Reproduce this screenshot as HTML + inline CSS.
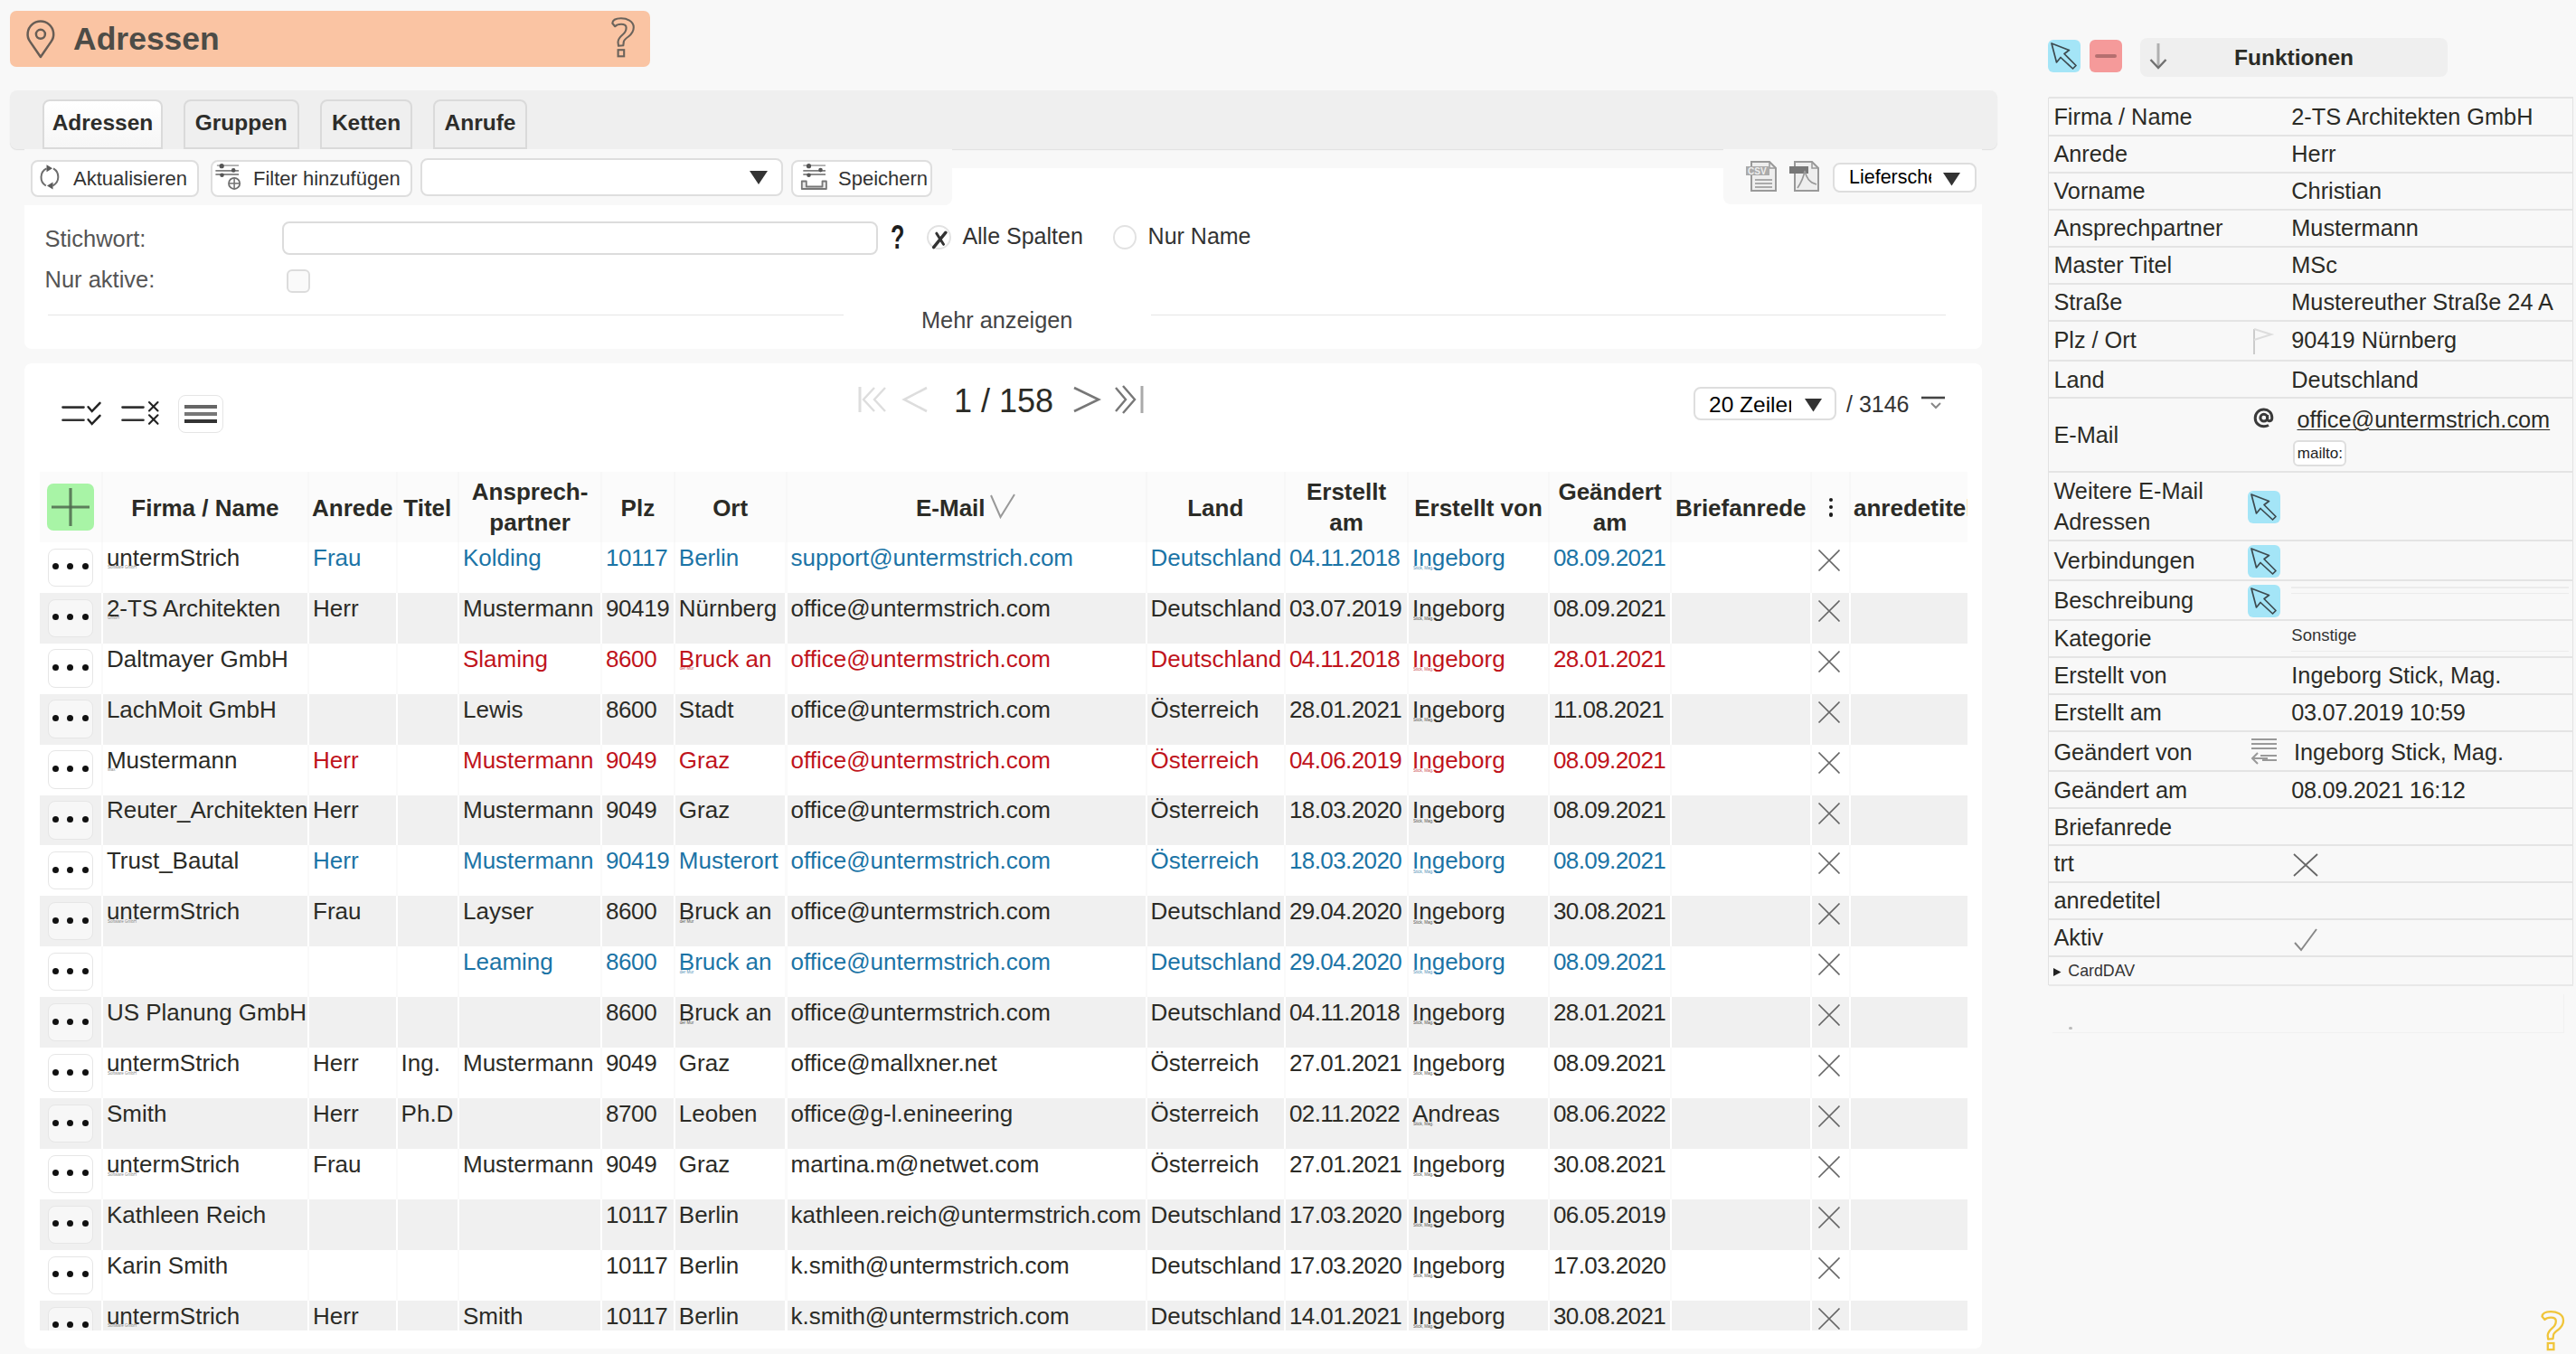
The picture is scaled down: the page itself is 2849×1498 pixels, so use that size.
<!DOCTYPE html>
<html><head><meta charset="utf-8"><title>Adressen</title>
<style>
html,body{margin:0;padding:0;}
body{width:2849px;height:1498px;position:relative;overflow:hidden;background:#f8f8f8;font-family:"Liberation Sans",sans-serif;}
.t{position:absolute;white-space:nowrap;}
.r{position:absolute;}
</style></head><body>
<div class="r" style="left:11.00px;top:12.00px;width:708.00px;height:62.00px;background:#fac4a3;border-radius:7px;"></div>
<svg class="r" style="left:27.00px;top:20.00px;" width="36" height="46" viewBox="0 0 36 46"><path d="M17.9 43 L6.13 25.9 A14.3 14.3 0 1 1 29.67 25.9 Z" fill="none" stroke="#675d55" stroke-width="2.5" stroke-linejoin="round"/><circle cx="17.9" cy="17.8" r="5" fill="none" stroke="#675d55" stroke-width="2.5"/></svg>
<div class="t " style="left:81.00px;top:25.75px;font-size:35.5px;line-height:35.5px;color:#4d4c47;font-weight:bold;">Adressen</div>
<svg class="r" style="left:660.00px;top:10.00px;" width="60" height="65" viewBox="0 0 60 65"><path d="M17.3 15.8 C17.5 13 20 10.3 26.9 10.3 C33 10.3 40.8 13 40.8 20.2 C40.8 24 39.4 27 35 30.5 C31.5 33 29.8 34.5 29.8 36.5 L29.3 40.3 L24 40.8 L23.5 36.5 C23.5 33 25.9 30.7 29 28 C31.5 26 32.6 23.5 32.6 20.6 C32.6 18 30.5 16.8 27 16.8 C23 16.8 21.5 17.8 20.2 19.2 Z" fill="none" stroke="#6b635b" stroke-width="2.1" stroke-linejoin="round"/><rect x="23.6" y="45.2" width="6.6" height="7.1" fill="none" stroke="#6b635b" stroke-width="2.1"/></svg>
<div class="r" style="left:11.00px;top:99.50px;width:2198.00px;height:65.50px;background:#efefef;border-radius:8px;box-shadow:0 1.5px 1px -0.5px #e0e0e0;"></div>
<div class="r" style="left:47.00px;top:109.50px;width:133.00px;height:55.00px;background:linear-gradient(#ffffff,#f6f6f6);border:2px solid #dadada;border-radius:8px 8px 0 0;box-sizing:border-box;"></div>
<div class="t " style="left:47.00px;top:124.26px;font-size:24.5px;line-height:24.5px;color:#2d2d2a;font-weight:bold;width:133.00px;text-align:center;">Adressen</div>
<div class="r" style="left:203.00px;top:109.50px;width:127.50px;height:55.00px;background:#efefef;border:2px solid #dadada;border-radius:8px 8px 0 0;box-sizing:border-box;"></div>
<div class="t " style="left:203.00px;top:124.26px;font-size:24.5px;line-height:24.5px;color:#2d2d2a;font-weight:bold;width:127.50px;text-align:center;">Gruppen</div>
<div class="r" style="left:354.00px;top:109.50px;width:102.00px;height:55.00px;background:#efefef;border:2px solid #dadada;border-radius:8px 8px 0 0;box-sizing:border-box;"></div>
<div class="t " style="left:354.00px;top:124.26px;font-size:24.5px;line-height:24.5px;color:#2d2d2a;font-weight:bold;width:102.00px;text-align:center;">Ketten</div>
<div class="r" style="left:479.00px;top:109.50px;width:104.00px;height:55.00px;background:#efefef;border:2px solid #dadada;border-radius:8px 8px 0 0;box-sizing:border-box;"></div>
<div class="t " style="left:479.00px;top:124.26px;font-size:24.5px;line-height:24.5px;color:#2d2d2a;font-weight:bold;width:104.00px;text-align:center;">Anrufe</div>
<div class="r" style="left:27.00px;top:186.00px;width:2165.00px;height:199.50px;background:#fff;border-radius:8px;"></div>
<div class="r" style="left:27.00px;top:165.00px;width:1026.00px;height:62.00px;background:#f8f8f8;border-radius:0 0 8px 0;"></div>
<div class="r" style="left:34.00px;top:176.50px;width:185.50px;height:41.00px;background:#fff;border:2px solid #dedede;border-radius:8px;box-sizing:border-box;"></div>
<svg class="r" style="left:36.00px;top:176.00px;" width="40" height="40" viewBox="0 0 40 40"><g fill="none" stroke="#6e6e6e" stroke-width="2"><path d="M23 10.3 A11 11 0 0 1 22.4 29.5"/><path d="M14.8 29.5 A11 11 0 0 1 15.5 10.3"/></g><path d="M15.5 6.2 L22 10.3 L15.5 14.3 Z" fill="#5a5a5a"/><path d="M22.5 25.5 L16 29.5 L22.5 33.5 Z" fill="#5a5a5a"/></svg>
<div class="t " style="left:81.00px;top:186.68px;font-size:22px;line-height:22px;color:#333;">Aktualisieren</div>
<div class="r" style="left:232.50px;top:176.50px;width:223.00px;height:41.00px;background:#fff;border:2px solid #dedede;border-radius:8px;box-sizing:border-box;"></div>
<svg class="r" style="left:234.00px;top:176.00px;" width="40" height="40" viewBox="0 0 40 40"><g stroke="#7a7a7a" stroke-width="1.7"><line x1="5.9" y1="7.1" x2="30.1" y2="7.1" stroke="#aaa"/><line x1="4.4" y1="12.9" x2="30.1" y2="12.9"/><line x1="4.4" y1="17" x2="30.1" y2="17"/></g><g fill="#555"><circle cx="11.2" cy="7.7" r="2.6"/><circle cx="24.2" cy="12.4" r="2.3"/><circle cx="11.5" cy="17.7" r="2.3"/></g><circle cx="25.1" cy="26.9" r="6.1" fill="#fff" stroke="#6e6e6e" stroke-width="1.8"/><line x1="25.1" y1="20.8" x2="25.1" y2="33" stroke="#777" stroke-width="1.6"/><line x1="19" y1="26.9" x2="31.2" y2="26.9" stroke="#777" stroke-width="1.6"/></svg>
<div class="t " style="left:280.00px;top:186.68px;font-size:22px;line-height:22px;color:#333;">Filter hinzufügen</div>
<div class="r" style="left:464.50px;top:175.00px;width:401.00px;height:41.50px;background:#fff;border:2px solid #dedede;border-radius:8px;box-sizing:border-box;"></div>
<svg class="r" style="left:828.00px;top:188.00px;" width="22" height="17" viewBox="0 0 22 17"><path d="M1 1 L21 1 L11 16 Z" fill="#333"/></svg>
<div class="r" style="left:875.00px;top:176.50px;width:155.50px;height:41.00px;background:#fff;border:2px solid #dedede;border-radius:8px;box-sizing:border-box;"></div>
<svg class="r" style="left:880.00px;top:176.00px;" width="40" height="40" viewBox="0 0 40 40"><g stroke="#7a7a7a" stroke-width="1.7"><line x1="8.3" y1="7.1" x2="33" y2="7.1" stroke="#aaa"/><line x1="8.3" y1="12.9" x2="33" y2="12.9"/><line x1="8.3" y1="17" x2="33" y2="17"/></g><g fill="#555"><circle cx="14.5" cy="7.7" r="2.6"/><circle cx="27.5" cy="12.1" r="2.3"/><circle cx="14.5" cy="17.7" r="2.3"/></g><path d="M6.8 24.5 L6.8 33 L33.9 33 L33.9 24.5 L29.5 24.5 L29.5 30.5 L11.8 30.5 L11.8 24.5 Z" fill="#e8e8e8" stroke="#777" stroke-width="1.8" stroke-linejoin="round"/></svg>
<div class="t " style="left:927.00px;top:186.68px;font-size:22px;line-height:22px;color:#333;">Speichern</div>
<div class="r" style="left:1906.00px;top:165.00px;width:286.00px;height:61.00px;background:#f8f8f8;border-radius:0 0 0 8px;"></div>
<svg class="r" style="left:1929.00px;top:177.00px;" width="38" height="36" viewBox="0 0 38 36"><path d="M8 2 L28 2 L35 9 L35 34 L8 34 Z" fill="#eee" stroke="#999" stroke-width="2"/><path d="M28 2 L28 9 L35 9" fill="none" stroke="#999" stroke-width="1.5"/><rect x="2" y="7" width="26" height="10" fill="#aaa"/><text x="4" y="16" font-family="Liberation Sans" font-size="10" font-weight="bold" fill="#eee">CSV</text><g stroke="#aaa" stroke-width="2"><line x1="12" y1="22" x2="31" y2="22"/><line x1="12" y1="26" x2="31" y2="26"/><line x1="12" y1="30" x2="31" y2="30"/></g></svg>
<svg class="r" style="left:1977.00px;top:177.00px;" width="38" height="36" viewBox="0 0 38 36"><path d="M8 2 L27 2 L34 9 L34 34 L8 34 Z" fill="#eee" stroke="#999" stroke-width="2"/><path d="M27 2 L27 9 L34 9" fill="none" stroke="#999" stroke-width="1.5"/><rect x="2" y="7" width="21" height="8" fill="#777"/><path d="M11 31 C15 25 18 18 19 12 C21 20 24 25 32 27" fill="none" stroke="#999" stroke-width="1.6"/></svg>
<div class="r" style="left:2026.50px;top:180.30px;width:159.00px;height:33.20px;background:#fff;border:2px solid #dedede;border-radius:8px;box-sizing:border-box;"></div>
<div class="t" style="left:2045px;top:183px;width:91px;overflow:hidden;font-size:21.5px;line-height:26px;color:#000;">Lieferschein</div>
<svg class="r" style="left:2148.00px;top:190.00px;" width="22" height="17" viewBox="0 0 22 17"><path d="M1 1 L20 1 L10.5 15.5 Z" fill="#333"/></svg>
<div class="t " style="left:49.50px;top:251.61px;font-size:25.5px;line-height:25.5px;color:#555;">Stichwort:</div>
<div class="t " style="left:49.50px;top:296.61px;font-size:25.5px;line-height:25.5px;color:#555;">Nur aktive:</div>
<div class="r" style="left:311.50px;top:244.80px;width:659.20px;height:37.40px;border:2px solid #dcdcdc;border-radius:8px;box-sizing:border-box;background:#fff;"></div>
<div class="t " style="left:985.00px;top:245.03px;font-size:36px;line-height:36px;color:#1e1e1e;font-weight:bold;transform:scaleX(0.7);transform-origin:0 0;">?</div>
<div class="r" style="left:1025.00px;top:249.00px;width:27.00px;height:27.00px;border:2px solid #e2e2e2;border-radius:50%;box-sizing:border-box;"></div>
<svg class="r" style="left:1025.00px;top:249.00px;" width="30" height="30" viewBox="0 0 30 30"><path d="M7.6 24.6 L21 8.2" stroke="#333" stroke-width="3.4" stroke-linecap="round" fill="none"/><path d="M10.8 9.2 L18.5 21.3" stroke="#333" stroke-width="3" stroke-linecap="round" fill="none"/></svg>
<div class="t " style="left:1064.40px;top:248.64px;font-size:25px;line-height:25px;color:#333;">Alle Spalten</div>
<div class="r" style="left:1230.50px;top:249.00px;width:26.50px;height:27.00px;border:2px solid #e2e2e2;border-radius:50%;box-sizing:border-box;"></div>
<div class="t " style="left:1269.60px;top:248.64px;font-size:25px;line-height:25px;color:#333;">Nur Name</div>
<div class="r" style="left:317.40px;top:298.30px;width:25.90px;height:26.10px;border:2px solid #dcdcdc;border-radius:6px;box-sizing:border-box;background:#fafafa;"></div>
<div class="r" style="left:53.00px;top:347.50px;width:880.00px;height:1.50px;background:#e6e6e6;"></div>
<div class="r" style="left:1273.00px;top:347.50px;width:879.00px;height:1.50px;background:#e6e6e6;"></div>
<div class="t " style="left:1019.00px;top:341.58px;font-size:25.3px;line-height:25.3px;color:#444;">Mehr anzeigen</div>
<div class="r" style="left:27.00px;top:402.00px;width:2165.00px;height:1089.50px;background:#fff;border-radius:8px;"></div>
<svg class="r" style="left:66.00px;top:442.00px;" width="48" height="30" viewBox="0 0 48 30"><g stroke="#333" stroke-width="2.6" stroke-linecap="round"><line x1="3.5" y1="8.6" x2="26.5" y2="8.6"/><line x1="3.5" y1="22.7" x2="26.5" y2="22.7"/></g><path d="M31.6 8.3 L35.7 13 L44.5 3.9" fill="none" stroke="#222" stroke-width="2.5" stroke-linecap="round"/><path d="M31.6 22.3 L35.7 27 L44.5 17.9" fill="none" stroke="#222" stroke-width="2.5" stroke-linecap="round"/></svg>
<svg class="r" style="left:132.00px;top:442.00px;" width="48" height="30" viewBox="0 0 48 30"><g stroke="#333" stroke-width="2.6" stroke-linecap="round"><line x1="3.5" y1="8.6" x2="26.5" y2="8.6"/><line x1="3.5" y1="22.7" x2="26.5" y2="22.7"/></g><g stroke="#222" stroke-width="2.1" stroke-linecap="round"><line x1="33" y1="3" x2="42.5" y2="12.5"/><line x1="42.5" y1="3" x2="33" y2="12.5"/><line x1="33" y1="17.3" x2="42.5" y2="26.8"/><line x1="42.5" y1="17.3" x2="33" y2="26.8"/></g></svg>
<div class="r" style="left:197.00px;top:436.80px;width:49.80px;height:42.20px;border:1.5px solid #e5e5e5;border-radius:8px;box-sizing:border-box;background:#fff;"></div>
<div class="r" style="left:203.80px;top:447.70px;width:36.20px;height:4.00px;background:#666;"></div>
<div class="r" style="left:203.80px;top:455.80px;width:36.20px;height:4.00px;background:#777;"></div>
<div class="r" style="left:203.80px;top:464.00px;width:36.20px;height:4.00px;background:#333;"></div>
<svg class="r" style="left:948.00px;top:426.00px;" width="36" height="32" viewBox="0 0 36 32"><line x1="3" y1="2" x2="3" y2="30" stroke="#ddd" stroke-width="3"/><path d="M19 3 L7 16 L19 29" fill="none" stroke="#ddd" stroke-width="2.4"/><path d="M31 3 L19 16 L31 29" fill="none" stroke="#ddd" stroke-width="2.4"/></svg>
<svg class="r" style="left:996.00px;top:426.00px;" width="32" height="32" viewBox="0 0 32 32"><path d="M29 3 L4 16 L29 29" fill="none" stroke="#ddd" stroke-width="2.6"/></svg>
<div class="t " style="left:1055.00px;top:425.83px;font-size:36px;line-height:36px;color:#2b2b26;letter-spacing:0px;">1 / 158</div>
<svg class="r" style="left:1185.00px;top:426.00px;" width="34" height="32" viewBox="0 0 34 32"><path d="M3 3 L30 16 L3 29" fill="none" stroke="#777" stroke-width="2.6"/></svg>
<svg class="r" style="left:1232.00px;top:425.00px;" width="36" height="34" viewBox="0 0 36 34"><path d="M2 4 L13 17 L2 30" fill="none" stroke="#777" stroke-width="2.4"/><path d="M10 2 L23 17 L10 32" fill="none" stroke="#777" stroke-width="2.4"/><line x1="31" y1="2" x2="31" y2="32" stroke="#aaa" stroke-width="3"/></svg>
<div class="r" style="left:1872.90px;top:427.70px;width:158.30px;height:37.50px;background:#fff;border:2px solid #dedede;border-radius:8px;box-sizing:border-box;"></div>
<div class="t" style="left:1890px;top:434px;width:91px;overflow:hidden;font-size:24.5px;line-height:28px;color:#000;">20 Zeilen</div>
<svg class="r" style="left:1995.00px;top:440.00px;" width="21" height="17" viewBox="0 0 21 17"><path d="M1 1 L20 1 L10.5 15.5 Z" fill="#333"/></svg>
<div class="t " style="left:2042.00px;top:434.74px;font-size:25px;line-height:25px;color:#333;">/ 3146</div>
<svg class="r" style="left:2124.00px;top:437.00px;" width="28" height="18" viewBox="0 0 28 18"><line x1="1" y1="3" x2="27" y2="3" stroke="#444" stroke-width="2.6"/><path d="M12 9 L17 14 L22 9" fill="none" stroke="#888" stroke-width="2"/></svg>
<div class="r" style="left:0;top:0;width:2176px;height:1472px;overflow:hidden;">
<div class="r" style="left:44.00px;top:522.00px;width:2132.00px;height:78.50px;background:#fbfbfb;"></div>
<div class="t " style="left:113.90px;top:549.39px;font-size:26px;line-height:26px;color:#2b2b26;font-weight:bold;width:226.10px;text-align:center;">Firma / Name</div>
<div class="t " style="left:342.00px;top:549.39px;font-size:26px;line-height:26px;color:#2b2b26;font-weight:bold;width:95.60px;text-align:center;">Anrede</div>
<div class="t " style="left:439.60px;top:549.39px;font-size:26px;line-height:26px;color:#2b2b26;font-weight:bold;width:66.40px;text-align:center;">Titel</div>
<div class="t " style="left:508.00px;top:530.99px;font-size:26px;line-height:26px;color:#2b2b26;font-weight:bold;width:156.20px;text-align:center;">Ansprech-</div>
<div class="t " style="left:508.00px;top:564.99px;font-size:26px;line-height:26px;color:#2b2b26;font-weight:bold;width:156.20px;text-align:center;">partner</div>
<div class="t " style="left:666.00px;top:549.39px;font-size:26px;line-height:26px;color:#2b2b26;font-weight:bold;width:78.80px;text-align:center;">Plz</div>
<div class="t " style="left:746.80px;top:549.39px;font-size:26px;line-height:26px;color:#2b2b26;font-weight:bold;width:121.70px;text-align:center;">Ort</div>
<div class="t " style="left:1013.00px;top:549.39px;font-size:26px;line-height:26px;color:#2b2b26;font-weight:bold;">E-Mail</div>
<div class="t " style="left:1268.60px;top:549.39px;font-size:26px;line-height:26px;color:#2b2b26;font-weight:bold;width:151.40px;text-align:center;">Land</div>
<div class="t " style="left:1422.00px;top:530.99px;font-size:26px;line-height:26px;color:#2b2b26;font-weight:bold;width:134.00px;text-align:center;">Erstellt</div>
<div class="t " style="left:1422.00px;top:564.99px;font-size:26px;line-height:26px;color:#2b2b26;font-weight:bold;width:134.00px;text-align:center;">am</div>
<div class="t " style="left:1558.00px;top:549.39px;font-size:26px;line-height:26px;color:#2b2b26;font-weight:bold;width:154.00px;text-align:center;">Erstellt von</div>
<div class="t " style="left:1714.00px;top:530.99px;font-size:26px;line-height:26px;color:#2b2b26;font-weight:bold;width:133.00px;text-align:center;">Geändert</div>
<div class="t " style="left:1714.00px;top:564.99px;font-size:26px;line-height:26px;color:#2b2b26;font-weight:bold;width:133.00px;text-align:center;">am</div>
<div class="t " style="left:1849.00px;top:549.39px;font-size:26px;line-height:26px;color:#2b2b26;font-weight:bold;width:152.50px;text-align:center;">Briefanrede</div>
<div class="t " style="left:2050.00px;top:549.39px;font-size:26px;line-height:26px;color:#2b2b26;font-weight:bold;">anredetitel</div>
<svg class="r" style="left:1093.00px;top:545.00px;" width="32" height="30" viewBox="0 0 32 30"><path d="M3 3 L13.5 27 L29 2" fill="none" stroke="#999" stroke-width="2"/></svg>
<div class="r" style="left:111.90px;top:522.00px;width:2.00px;height:78.50px;background:#f7f7f7;"></div>
<div class="r" style="left:340.00px;top:522.00px;width:2.00px;height:78.50px;background:#f7f7f7;"></div>
<div class="r" style="left:437.60px;top:522.00px;width:2.00px;height:78.50px;background:#f7f7f7;"></div>
<div class="r" style="left:506.00px;top:522.00px;width:2.00px;height:78.50px;background:#f7f7f7;"></div>
<div class="r" style="left:664.00px;top:522.00px;width:2.00px;height:78.50px;background:#f7f7f7;"></div>
<div class="r" style="left:744.80px;top:522.00px;width:2.00px;height:78.50px;background:#f7f7f7;"></div>
<div class="r" style="left:868.50px;top:522.00px;width:2.00px;height:78.50px;background:#f7f7f7;"></div>
<div class="r" style="left:1266.60px;top:522.00px;width:2.00px;height:78.50px;background:#f7f7f7;"></div>
<div class="r" style="left:1420.00px;top:522.00px;width:2.00px;height:78.50px;background:#f7f7f7;"></div>
<div class="r" style="left:1556.00px;top:522.00px;width:2.00px;height:78.50px;background:#f7f7f7;"></div>
<div class="r" style="left:1712.00px;top:522.00px;width:2.00px;height:78.50px;background:#f7f7f7;"></div>
<div class="r" style="left:1847.00px;top:522.00px;width:2.00px;height:78.50px;background:#f7f7f7;"></div>
<div class="r" style="left:2001.50px;top:522.00px;width:2.00px;height:78.50px;background:#f7f7f7;"></div>
<div class="r" style="left:2045.00px;top:522.00px;width:2.00px;height:78.50px;background:#f7f7f7;"></div>
<div class="r" style="left:52.00px;top:535.00px;width:52.00px;height:52.00px;background:#a8f4a6;border-radius:7px;"></div>
<svg class="r" style="left:52.00px;top:535.00px;" width="52" height="52" viewBox="0 0 52 52"><line x1="26" y1="5" x2="26" y2="47" stroke="#4f6b4f" stroke-width="3.2" opacity="0.85"/><line x1="5" y1="26" x2="47" y2="26" stroke="#4f6b4f" stroke-width="3.2" opacity="0.85"/></svg>
<div class="r" style="left:2022.50px;top:551.00px;width:4.20px;height:4.20px;background:#1a1a1a;border-radius:50%;"></div>
<div class="r" style="left:2022.50px;top:559.00px;width:4.20px;height:4.20px;background:#1a1a1a;border-radius:50%;"></div>
<div class="r" style="left:2022.50px;top:567.40px;width:4.20px;height:4.20px;background:#1a1a1a;border-radius:50%;"></div>
<div class="r" style="left:44.00px;top:599.90px;width:2132.00px;height:55.93px;background:#fafafa;"></div>
<div class="r" style="left:44.00px;top:599.90px;width:67.70px;height:55.93px;background:#ffffff;"></div>
<div class="r" style="left:113.90px;top:599.90px;width:226.10px;height:55.93px;background:#ffffff;"></div>
<div class="r" style="left:342.00px;top:599.90px;width:95.60px;height:55.93px;background:#ffffff;"></div>
<div class="r" style="left:439.60px;top:599.90px;width:66.40px;height:55.93px;background:#ffffff;"></div>
<div class="r" style="left:508.00px;top:599.90px;width:156.20px;height:55.93px;background:#ffffff;"></div>
<div class="r" style="left:666.00px;top:599.90px;width:78.80px;height:55.93px;background:#ffffff;"></div>
<div class="r" style="left:746.80px;top:599.90px;width:121.70px;height:55.93px;background:#ffffff;"></div>
<div class="r" style="left:870.50px;top:599.90px;width:396.10px;height:55.93px;background:#ffffff;"></div>
<div class="r" style="left:1268.60px;top:599.90px;width:151.40px;height:55.93px;background:#ffffff;"></div>
<div class="r" style="left:1422.00px;top:599.90px;width:134.00px;height:55.93px;background:#ffffff;"></div>
<div class="r" style="left:1558.00px;top:599.90px;width:154.00px;height:55.93px;background:#ffffff;"></div>
<div class="r" style="left:1714.00px;top:599.90px;width:133.00px;height:55.93px;background:#ffffff;"></div>
<div class="r" style="left:1849.00px;top:599.90px;width:152.50px;height:55.93px;background:#ffffff;"></div>
<div class="r" style="left:2003.50px;top:599.90px;width:41.50px;height:55.93px;background:#ffffff;"></div>
<div class="r" style="left:2047.00px;top:599.90px;width:129.00px;height:55.93px;background:#ffffff;"></div>
<div class="r" style="left:52.70px;top:606.60px;width:50.50px;height:42.30px;background:#fff;border:1.5px solid #e6e6e6;border-radius:8px;box-sizing:border-box;"></div>
<div class="r" style="left:57.80px;top:623.30px;width:7.00px;height:7.00px;background:#111;border-radius:50%;"></div>
<div class="r" style="left:74.20px;top:623.30px;width:7.00px;height:7.00px;background:#111;border-radius:50%;"></div>
<div class="r" style="left:90.80px;top:623.30px;width:7.00px;height:7.00px;background:#111;border-radius:50%;"></div>
<div class="t " style="left:117.90px;top:603.79px;font-size:26px;line-height:26px;color:#2b2b26;">untermStrich</div>
<div class="t " style="left:346.00px;top:603.79px;font-size:26px;line-height:26px;color:#1b74a6;">Frau</div>
<div class="t " style="left:512.00px;top:603.79px;font-size:26px;line-height:26px;color:#1b74a6;">Kolding</div>
<div class="t " style="left:670.00px;top:603.79px;font-size:26px;line-height:26px;color:#1b74a6;letter-spacing:-0.4px;">10117</div>
<div class="t " style="left:750.80px;top:603.79px;font-size:26px;line-height:26px;color:#1b74a6;">Berlin</div>
<div class="t " style="left:874.50px;top:603.79px;font-size:26px;line-height:26px;color:#1b74a6;">support@untermstrich.com</div>
<div class="t " style="left:1272.60px;top:603.79px;font-size:26px;line-height:26px;color:#1b74a6;">Deutschland</div>
<div class="t " style="left:1426.00px;top:603.79px;font-size:26px;line-height:26px;color:#1b74a6;letter-spacing:-0.6px;">04.11.2018</div>
<div class="t " style="left:1562.00px;top:603.79px;font-size:26px;line-height:26px;color:#1b74a6;">Ingeborg</div>
<div class="t " style="left:1718.00px;top:603.79px;font-size:26px;line-height:26px;color:#1b74a6;letter-spacing:-0.6px;">08.09.2021</div>
<div class="t " style="left:118.90px;top:626.49px;font-size:4.5px;line-height:4.5px;color:#888;">Software GmbH</div>
<div class="t " style="left:1563.00px;top:626.99px;font-size:4.5px;line-height:4.5px;color:#1b74a6;opacity:0.8;">Stick, Mag.</div>
<svg class="r" style="left:2010.00px;top:606.90px;" width="26" height="26" viewBox="0 0 26 26"><path d="M1.5 1.5 L24.5 24.5 M24.5 1.5 L1.5 24.5" stroke="#666" stroke-width="1.7" fill="none"/></svg>
<div class="r" style="left:44.00px;top:655.83px;width:2132.00px;height:55.93px;background:#ffffff;"></div>
<div class="r" style="left:44.00px;top:655.83px;width:67.70px;height:55.93px;background:#f0f0f0;"></div>
<div class="r" style="left:113.90px;top:655.83px;width:226.10px;height:55.93px;background:#f0f0f0;"></div>
<div class="r" style="left:342.00px;top:655.83px;width:95.60px;height:55.93px;background:#f0f0f0;"></div>
<div class="r" style="left:439.60px;top:655.83px;width:66.40px;height:55.93px;background:#f0f0f0;"></div>
<div class="r" style="left:508.00px;top:655.83px;width:156.20px;height:55.93px;background:#f0f0f0;"></div>
<div class="r" style="left:666.00px;top:655.83px;width:78.80px;height:55.93px;background:#f0f0f0;"></div>
<div class="r" style="left:746.80px;top:655.83px;width:121.70px;height:55.93px;background:#f0f0f0;"></div>
<div class="r" style="left:870.50px;top:655.83px;width:396.10px;height:55.93px;background:#f0f0f0;"></div>
<div class="r" style="left:1268.60px;top:655.83px;width:151.40px;height:55.93px;background:#f0f0f0;"></div>
<div class="r" style="left:1422.00px;top:655.83px;width:134.00px;height:55.93px;background:#f0f0f0;"></div>
<div class="r" style="left:1558.00px;top:655.83px;width:154.00px;height:55.93px;background:#f0f0f0;"></div>
<div class="r" style="left:1714.00px;top:655.83px;width:133.00px;height:55.93px;background:#f0f0f0;"></div>
<div class="r" style="left:1849.00px;top:655.83px;width:152.50px;height:55.93px;background:#f0f0f0;"></div>
<div class="r" style="left:2003.50px;top:655.83px;width:41.50px;height:55.93px;background:#f0f0f0;"></div>
<div class="r" style="left:2047.00px;top:655.83px;width:129.00px;height:55.93px;background:#f0f0f0;"></div>
<div class="r" style="left:52.70px;top:662.53px;width:50.50px;height:42.30px;background:#f7f7f7;border:1.5px solid #e6e6e6;border-radius:8px;box-sizing:border-box;"></div>
<div class="r" style="left:57.80px;top:679.23px;width:7.00px;height:7.00px;background:#111;border-radius:50%;"></div>
<div class="r" style="left:74.20px;top:679.23px;width:7.00px;height:7.00px;background:#111;border-radius:50%;"></div>
<div class="r" style="left:90.80px;top:679.23px;width:7.00px;height:7.00px;background:#111;border-radius:50%;"></div>
<div class="t " style="left:117.90px;top:659.72px;font-size:26px;line-height:26px;color:#2b2b26;">2-TS Architekten</div>
<div class="t " style="left:346.00px;top:659.72px;font-size:26px;line-height:26px;color:#2b2b26;">Herr</div>
<div class="t " style="left:512.00px;top:659.72px;font-size:26px;line-height:26px;color:#2b2b26;">Mustermann</div>
<div class="t " style="left:670.00px;top:659.72px;font-size:26px;line-height:26px;color:#2b2b26;letter-spacing:-0.4px;">90419</div>
<div class="t " style="left:750.80px;top:659.72px;font-size:26px;line-height:26px;color:#2b2b26;">Nürnberg</div>
<div class="t " style="left:874.50px;top:659.72px;font-size:26px;line-height:26px;color:#2b2b26;">office@untermstrich.com</div>
<div class="t " style="left:1272.60px;top:659.72px;font-size:26px;line-height:26px;color:#2b2b26;">Deutschland</div>
<div class="t " style="left:1426.00px;top:659.72px;font-size:26px;line-height:26px;color:#2b2b26;letter-spacing:-0.6px;">03.07.2019</div>
<div class="t " style="left:1562.00px;top:659.72px;font-size:26px;line-height:26px;color:#2b2b26;">Ingeborg</div>
<div class="t " style="left:1718.00px;top:659.72px;font-size:26px;line-height:26px;color:#2b2b26;letter-spacing:-0.6px;">08.09.2021</div>
<div class="t " style="left:118.90px;top:682.42px;font-size:4.5px;line-height:4.5px;color:#888;">GmbH</div>
<div class="t " style="left:1563.00px;top:682.92px;font-size:4.5px;line-height:4.5px;color:#2b2b26;opacity:0.8;">Stick, Mag.</div>
<svg class="r" style="left:2010.00px;top:662.83px;" width="26" height="26" viewBox="0 0 26 26"><path d="M1.5 1.5 L24.5 24.5 M24.5 1.5 L1.5 24.5" stroke="#666" stroke-width="1.7" fill="none"/></svg>
<div class="r" style="left:44.00px;top:711.76px;width:2132.00px;height:55.93px;background:#fafafa;"></div>
<div class="r" style="left:44.00px;top:711.76px;width:67.70px;height:55.93px;background:#ffffff;"></div>
<div class="r" style="left:113.90px;top:711.76px;width:226.10px;height:55.93px;background:#ffffff;"></div>
<div class="r" style="left:342.00px;top:711.76px;width:95.60px;height:55.93px;background:#ffffff;"></div>
<div class="r" style="left:439.60px;top:711.76px;width:66.40px;height:55.93px;background:#ffffff;"></div>
<div class="r" style="left:508.00px;top:711.76px;width:156.20px;height:55.93px;background:#ffffff;"></div>
<div class="r" style="left:666.00px;top:711.76px;width:78.80px;height:55.93px;background:#ffffff;"></div>
<div class="r" style="left:746.80px;top:711.76px;width:121.70px;height:55.93px;background:#ffffff;"></div>
<div class="r" style="left:870.50px;top:711.76px;width:396.10px;height:55.93px;background:#ffffff;"></div>
<div class="r" style="left:1268.60px;top:711.76px;width:151.40px;height:55.93px;background:#ffffff;"></div>
<div class="r" style="left:1422.00px;top:711.76px;width:134.00px;height:55.93px;background:#ffffff;"></div>
<div class="r" style="left:1558.00px;top:711.76px;width:154.00px;height:55.93px;background:#ffffff;"></div>
<div class="r" style="left:1714.00px;top:711.76px;width:133.00px;height:55.93px;background:#ffffff;"></div>
<div class="r" style="left:1849.00px;top:711.76px;width:152.50px;height:55.93px;background:#ffffff;"></div>
<div class="r" style="left:2003.50px;top:711.76px;width:41.50px;height:55.93px;background:#ffffff;"></div>
<div class="r" style="left:2047.00px;top:711.76px;width:129.00px;height:55.93px;background:#ffffff;"></div>
<div class="r" style="left:52.70px;top:718.46px;width:50.50px;height:42.30px;background:#fff;border:1.5px solid #e6e6e6;border-radius:8px;box-sizing:border-box;"></div>
<div class="r" style="left:57.80px;top:735.16px;width:7.00px;height:7.00px;background:#111;border-radius:50%;"></div>
<div class="r" style="left:74.20px;top:735.16px;width:7.00px;height:7.00px;background:#111;border-radius:50%;"></div>
<div class="r" style="left:90.80px;top:735.16px;width:7.00px;height:7.00px;background:#111;border-radius:50%;"></div>
<div class="t " style="left:117.90px;top:715.65px;font-size:26px;line-height:26px;color:#2b2b26;">Daltmayer GmbH</div>
<div class="t " style="left:512.00px;top:715.65px;font-size:26px;line-height:26px;color:#c0141c;">Slaming</div>
<div class="t " style="left:670.00px;top:715.65px;font-size:26px;line-height:26px;color:#c0141c;letter-spacing:-0.4px;">8600</div>
<div class="t " style="left:750.80px;top:715.65px;font-size:26px;line-height:26px;color:#c0141c;">Bruck an</div>
<div class="t " style="left:874.50px;top:715.65px;font-size:26px;line-height:26px;color:#c0141c;">office@untermstrich.com</div>
<div class="t " style="left:1272.60px;top:715.65px;font-size:26px;line-height:26px;color:#c0141c;">Deutschland</div>
<div class="t " style="left:1426.00px;top:715.65px;font-size:26px;line-height:26px;color:#c0141c;letter-spacing:-0.6px;">04.11.2018</div>
<div class="t " style="left:1562.00px;top:715.65px;font-size:26px;line-height:26px;color:#c0141c;">Ingeborg</div>
<div class="t " style="left:1718.00px;top:715.65px;font-size:26px;line-height:26px;color:#c0141c;letter-spacing:-0.6px;">28.01.2021</div>
<div class="t " style="left:751.80px;top:738.35px;font-size:4.5px;line-height:4.5px;color:#c0141c;opacity:0.8;">der Mur</div>
<div class="t " style="left:1563.00px;top:738.85px;font-size:4.5px;line-height:4.5px;color:#c0141c;opacity:0.8;">Stick, Mag.</div>
<svg class="r" style="left:2010.00px;top:718.76px;" width="26" height="26" viewBox="0 0 26 26"><path d="M1.5 1.5 L24.5 24.5 M24.5 1.5 L1.5 24.5" stroke="#666" stroke-width="1.7" fill="none"/></svg>
<div class="r" style="left:44.00px;top:767.69px;width:2132.00px;height:55.93px;background:#ffffff;"></div>
<div class="r" style="left:44.00px;top:767.69px;width:67.70px;height:55.93px;background:#f0f0f0;"></div>
<div class="r" style="left:113.90px;top:767.69px;width:226.10px;height:55.93px;background:#f0f0f0;"></div>
<div class="r" style="left:342.00px;top:767.69px;width:95.60px;height:55.93px;background:#f0f0f0;"></div>
<div class="r" style="left:439.60px;top:767.69px;width:66.40px;height:55.93px;background:#f0f0f0;"></div>
<div class="r" style="left:508.00px;top:767.69px;width:156.20px;height:55.93px;background:#f0f0f0;"></div>
<div class="r" style="left:666.00px;top:767.69px;width:78.80px;height:55.93px;background:#f0f0f0;"></div>
<div class="r" style="left:746.80px;top:767.69px;width:121.70px;height:55.93px;background:#f0f0f0;"></div>
<div class="r" style="left:870.50px;top:767.69px;width:396.10px;height:55.93px;background:#f0f0f0;"></div>
<div class="r" style="left:1268.60px;top:767.69px;width:151.40px;height:55.93px;background:#f0f0f0;"></div>
<div class="r" style="left:1422.00px;top:767.69px;width:134.00px;height:55.93px;background:#f0f0f0;"></div>
<div class="r" style="left:1558.00px;top:767.69px;width:154.00px;height:55.93px;background:#f0f0f0;"></div>
<div class="r" style="left:1714.00px;top:767.69px;width:133.00px;height:55.93px;background:#f0f0f0;"></div>
<div class="r" style="left:1849.00px;top:767.69px;width:152.50px;height:55.93px;background:#f0f0f0;"></div>
<div class="r" style="left:2003.50px;top:767.69px;width:41.50px;height:55.93px;background:#f0f0f0;"></div>
<div class="r" style="left:2047.00px;top:767.69px;width:129.00px;height:55.93px;background:#f0f0f0;"></div>
<div class="r" style="left:52.70px;top:774.39px;width:50.50px;height:42.30px;background:#f7f7f7;border:1.5px solid #e6e6e6;border-radius:8px;box-sizing:border-box;"></div>
<div class="r" style="left:57.80px;top:791.09px;width:7.00px;height:7.00px;background:#111;border-radius:50%;"></div>
<div class="r" style="left:74.20px;top:791.09px;width:7.00px;height:7.00px;background:#111;border-radius:50%;"></div>
<div class="r" style="left:90.80px;top:791.09px;width:7.00px;height:7.00px;background:#111;border-radius:50%;"></div>
<div class="t " style="left:117.90px;top:771.58px;font-size:26px;line-height:26px;color:#2b2b26;">LachMoit GmbH</div>
<div class="t " style="left:512.00px;top:771.58px;font-size:26px;line-height:26px;color:#2b2b26;">Lewis</div>
<div class="t " style="left:670.00px;top:771.58px;font-size:26px;line-height:26px;color:#2b2b26;letter-spacing:-0.4px;">8600</div>
<div class="t " style="left:750.80px;top:771.58px;font-size:26px;line-height:26px;color:#2b2b26;">Stadt</div>
<div class="t " style="left:874.50px;top:771.58px;font-size:26px;line-height:26px;color:#2b2b26;">office@untermstrich.com</div>
<div class="t " style="left:1272.60px;top:771.58px;font-size:26px;line-height:26px;color:#2b2b26;">Österreich</div>
<div class="t " style="left:1426.00px;top:771.58px;font-size:26px;line-height:26px;color:#2b2b26;letter-spacing:-0.6px;">28.01.2021</div>
<div class="t " style="left:1562.00px;top:771.58px;font-size:26px;line-height:26px;color:#2b2b26;">Ingeborg</div>
<div class="t " style="left:1718.00px;top:771.58px;font-size:26px;line-height:26px;color:#2b2b26;letter-spacing:-0.6px;">11.08.2021</div>
<div class="t " style="left:1563.00px;top:794.78px;font-size:4.5px;line-height:4.5px;color:#2b2b26;opacity:0.8;">Stick, Mag.</div>
<svg class="r" style="left:2010.00px;top:774.69px;" width="26" height="26" viewBox="0 0 26 26"><path d="M1.5 1.5 L24.5 24.5 M24.5 1.5 L1.5 24.5" stroke="#666" stroke-width="1.7" fill="none"/></svg>
<div class="r" style="left:44.00px;top:823.62px;width:2132.00px;height:55.93px;background:#fafafa;"></div>
<div class="r" style="left:44.00px;top:823.62px;width:67.70px;height:55.93px;background:#ffffff;"></div>
<div class="r" style="left:113.90px;top:823.62px;width:226.10px;height:55.93px;background:#ffffff;"></div>
<div class="r" style="left:342.00px;top:823.62px;width:95.60px;height:55.93px;background:#ffffff;"></div>
<div class="r" style="left:439.60px;top:823.62px;width:66.40px;height:55.93px;background:#ffffff;"></div>
<div class="r" style="left:508.00px;top:823.62px;width:156.20px;height:55.93px;background:#ffffff;"></div>
<div class="r" style="left:666.00px;top:823.62px;width:78.80px;height:55.93px;background:#ffffff;"></div>
<div class="r" style="left:746.80px;top:823.62px;width:121.70px;height:55.93px;background:#ffffff;"></div>
<div class="r" style="left:870.50px;top:823.62px;width:396.10px;height:55.93px;background:#ffffff;"></div>
<div class="r" style="left:1268.60px;top:823.62px;width:151.40px;height:55.93px;background:#ffffff;"></div>
<div class="r" style="left:1422.00px;top:823.62px;width:134.00px;height:55.93px;background:#ffffff;"></div>
<div class="r" style="left:1558.00px;top:823.62px;width:154.00px;height:55.93px;background:#ffffff;"></div>
<div class="r" style="left:1714.00px;top:823.62px;width:133.00px;height:55.93px;background:#ffffff;"></div>
<div class="r" style="left:1849.00px;top:823.62px;width:152.50px;height:55.93px;background:#ffffff;"></div>
<div class="r" style="left:2003.50px;top:823.62px;width:41.50px;height:55.93px;background:#ffffff;"></div>
<div class="r" style="left:2047.00px;top:823.62px;width:129.00px;height:55.93px;background:#ffffff;"></div>
<div class="r" style="left:52.70px;top:830.32px;width:50.50px;height:42.30px;background:#fff;border:1.5px solid #e6e6e6;border-radius:8px;box-sizing:border-box;"></div>
<div class="r" style="left:57.80px;top:847.02px;width:7.00px;height:7.00px;background:#111;border-radius:50%;"></div>
<div class="r" style="left:74.20px;top:847.02px;width:7.00px;height:7.00px;background:#111;border-radius:50%;"></div>
<div class="r" style="left:90.80px;top:847.02px;width:7.00px;height:7.00px;background:#111;border-radius:50%;"></div>
<div class="t " style="left:117.90px;top:827.51px;font-size:26px;line-height:26px;color:#2b2b26;">Mustermann</div>
<div class="t " style="left:346.00px;top:827.51px;font-size:26px;line-height:26px;color:#c0141c;">Herr</div>
<div class="t " style="left:512.00px;top:827.51px;font-size:26px;line-height:26px;color:#c0141c;">Mustermann</div>
<div class="t " style="left:670.00px;top:827.51px;font-size:26px;line-height:26px;color:#c0141c;letter-spacing:-0.4px;">9049</div>
<div class="t " style="left:750.80px;top:827.51px;font-size:26px;line-height:26px;color:#c0141c;">Graz</div>
<div class="t " style="left:874.50px;top:827.51px;font-size:26px;line-height:26px;color:#c0141c;">office@untermstrich.com</div>
<div class="t " style="left:1272.60px;top:827.51px;font-size:26px;line-height:26px;color:#c0141c;">Österreich</div>
<div class="t " style="left:1426.00px;top:827.51px;font-size:26px;line-height:26px;color:#c0141c;letter-spacing:-0.6px;">04.06.2019</div>
<div class="t " style="left:1562.00px;top:827.51px;font-size:26px;line-height:26px;color:#c0141c;">Ingeborg</div>
<div class="t " style="left:1718.00px;top:827.51px;font-size:26px;line-height:26px;color:#c0141c;letter-spacing:-0.6px;">08.09.2021</div>
<div class="t " style="left:118.90px;top:850.21px;font-size:4.5px;line-height:4.5px;color:#888;">Max</div>
<div class="t " style="left:1563.00px;top:850.71px;font-size:4.5px;line-height:4.5px;color:#c0141c;opacity:0.8;">Stick, Mag.</div>
<svg class="r" style="left:2010.00px;top:830.62px;" width="26" height="26" viewBox="0 0 26 26"><path d="M1.5 1.5 L24.5 24.5 M24.5 1.5 L1.5 24.5" stroke="#666" stroke-width="1.7" fill="none"/></svg>
<div class="r" style="left:44.00px;top:879.55px;width:2132.00px;height:55.93px;background:#ffffff;"></div>
<div class="r" style="left:44.00px;top:879.55px;width:67.70px;height:55.93px;background:#f0f0f0;"></div>
<div class="r" style="left:113.90px;top:879.55px;width:226.10px;height:55.93px;background:#f0f0f0;"></div>
<div class="r" style="left:342.00px;top:879.55px;width:95.60px;height:55.93px;background:#f0f0f0;"></div>
<div class="r" style="left:439.60px;top:879.55px;width:66.40px;height:55.93px;background:#f0f0f0;"></div>
<div class="r" style="left:508.00px;top:879.55px;width:156.20px;height:55.93px;background:#f0f0f0;"></div>
<div class="r" style="left:666.00px;top:879.55px;width:78.80px;height:55.93px;background:#f0f0f0;"></div>
<div class="r" style="left:746.80px;top:879.55px;width:121.70px;height:55.93px;background:#f0f0f0;"></div>
<div class="r" style="left:870.50px;top:879.55px;width:396.10px;height:55.93px;background:#f0f0f0;"></div>
<div class="r" style="left:1268.60px;top:879.55px;width:151.40px;height:55.93px;background:#f0f0f0;"></div>
<div class="r" style="left:1422.00px;top:879.55px;width:134.00px;height:55.93px;background:#f0f0f0;"></div>
<div class="r" style="left:1558.00px;top:879.55px;width:154.00px;height:55.93px;background:#f0f0f0;"></div>
<div class="r" style="left:1714.00px;top:879.55px;width:133.00px;height:55.93px;background:#f0f0f0;"></div>
<div class="r" style="left:1849.00px;top:879.55px;width:152.50px;height:55.93px;background:#f0f0f0;"></div>
<div class="r" style="left:2003.50px;top:879.55px;width:41.50px;height:55.93px;background:#f0f0f0;"></div>
<div class="r" style="left:2047.00px;top:879.55px;width:129.00px;height:55.93px;background:#f0f0f0;"></div>
<div class="r" style="left:52.70px;top:886.25px;width:50.50px;height:42.30px;background:#f7f7f7;border:1.5px solid #e6e6e6;border-radius:8px;box-sizing:border-box;"></div>
<div class="r" style="left:57.80px;top:902.95px;width:7.00px;height:7.00px;background:#111;border-radius:50%;"></div>
<div class="r" style="left:74.20px;top:902.95px;width:7.00px;height:7.00px;background:#111;border-radius:50%;"></div>
<div class="r" style="left:90.80px;top:902.95px;width:7.00px;height:7.00px;background:#111;border-radius:50%;"></div>
<div class="t " style="left:117.90px;top:883.44px;font-size:26px;line-height:26px;color:#2b2b26;">Reuter_Architekten</div>
<div class="t " style="left:346.00px;top:883.44px;font-size:26px;line-height:26px;color:#2b2b26;">Herr</div>
<div class="t " style="left:512.00px;top:883.44px;font-size:26px;line-height:26px;color:#2b2b26;">Mustermann</div>
<div class="t " style="left:670.00px;top:883.44px;font-size:26px;line-height:26px;color:#2b2b26;letter-spacing:-0.4px;">9049</div>
<div class="t " style="left:750.80px;top:883.44px;font-size:26px;line-height:26px;color:#2b2b26;">Graz</div>
<div class="t " style="left:874.50px;top:883.44px;font-size:26px;line-height:26px;color:#2b2b26;">office@untermstrich.com</div>
<div class="t " style="left:1272.60px;top:883.44px;font-size:26px;line-height:26px;color:#2b2b26;">Österreich</div>
<div class="t " style="left:1426.00px;top:883.44px;font-size:26px;line-height:26px;color:#2b2b26;letter-spacing:-0.6px;">18.03.2020</div>
<div class="t " style="left:1562.00px;top:883.44px;font-size:26px;line-height:26px;color:#2b2b26;">Ingeborg</div>
<div class="t " style="left:1718.00px;top:883.44px;font-size:26px;line-height:26px;color:#2b2b26;letter-spacing:-0.6px;">08.09.2021</div>
<div class="t " style="left:1563.00px;top:906.64px;font-size:4.5px;line-height:4.5px;color:#2b2b26;opacity:0.8;">Stick, Mag.</div>
<svg class="r" style="left:2010.00px;top:886.55px;" width="26" height="26" viewBox="0 0 26 26"><path d="M1.5 1.5 L24.5 24.5 M24.5 1.5 L1.5 24.5" stroke="#666" stroke-width="1.7" fill="none"/></svg>
<div class="r" style="left:44.00px;top:935.48px;width:2132.00px;height:55.93px;background:#fafafa;"></div>
<div class="r" style="left:44.00px;top:935.48px;width:67.70px;height:55.93px;background:#ffffff;"></div>
<div class="r" style="left:113.90px;top:935.48px;width:226.10px;height:55.93px;background:#ffffff;"></div>
<div class="r" style="left:342.00px;top:935.48px;width:95.60px;height:55.93px;background:#ffffff;"></div>
<div class="r" style="left:439.60px;top:935.48px;width:66.40px;height:55.93px;background:#ffffff;"></div>
<div class="r" style="left:508.00px;top:935.48px;width:156.20px;height:55.93px;background:#ffffff;"></div>
<div class="r" style="left:666.00px;top:935.48px;width:78.80px;height:55.93px;background:#ffffff;"></div>
<div class="r" style="left:746.80px;top:935.48px;width:121.70px;height:55.93px;background:#ffffff;"></div>
<div class="r" style="left:870.50px;top:935.48px;width:396.10px;height:55.93px;background:#ffffff;"></div>
<div class="r" style="left:1268.60px;top:935.48px;width:151.40px;height:55.93px;background:#ffffff;"></div>
<div class="r" style="left:1422.00px;top:935.48px;width:134.00px;height:55.93px;background:#ffffff;"></div>
<div class="r" style="left:1558.00px;top:935.48px;width:154.00px;height:55.93px;background:#ffffff;"></div>
<div class="r" style="left:1714.00px;top:935.48px;width:133.00px;height:55.93px;background:#ffffff;"></div>
<div class="r" style="left:1849.00px;top:935.48px;width:152.50px;height:55.93px;background:#ffffff;"></div>
<div class="r" style="left:2003.50px;top:935.48px;width:41.50px;height:55.93px;background:#ffffff;"></div>
<div class="r" style="left:2047.00px;top:935.48px;width:129.00px;height:55.93px;background:#ffffff;"></div>
<div class="r" style="left:52.70px;top:942.18px;width:50.50px;height:42.30px;background:#fff;border:1.5px solid #e6e6e6;border-radius:8px;box-sizing:border-box;"></div>
<div class="r" style="left:57.80px;top:958.88px;width:7.00px;height:7.00px;background:#111;border-radius:50%;"></div>
<div class="r" style="left:74.20px;top:958.88px;width:7.00px;height:7.00px;background:#111;border-radius:50%;"></div>
<div class="r" style="left:90.80px;top:958.88px;width:7.00px;height:7.00px;background:#111;border-radius:50%;"></div>
<div class="t " style="left:117.90px;top:939.37px;font-size:26px;line-height:26px;color:#2b2b26;">Trust_Bautal</div>
<div class="t " style="left:346.00px;top:939.37px;font-size:26px;line-height:26px;color:#1b74a6;">Herr</div>
<div class="t " style="left:512.00px;top:939.37px;font-size:26px;line-height:26px;color:#1b74a6;">Mustermann</div>
<div class="t " style="left:670.00px;top:939.37px;font-size:26px;line-height:26px;color:#1b74a6;letter-spacing:-0.4px;">90419</div>
<div class="t " style="left:750.80px;top:939.37px;font-size:26px;line-height:26px;color:#1b74a6;">Musterort</div>
<div class="t " style="left:874.50px;top:939.37px;font-size:26px;line-height:26px;color:#1b74a6;">office@untermstrich.com</div>
<div class="t " style="left:1272.60px;top:939.37px;font-size:26px;line-height:26px;color:#1b74a6;">Österreich</div>
<div class="t " style="left:1426.00px;top:939.37px;font-size:26px;line-height:26px;color:#1b74a6;letter-spacing:-0.6px;">18.03.2020</div>
<div class="t " style="left:1562.00px;top:939.37px;font-size:26px;line-height:26px;color:#1b74a6;">Ingeborg</div>
<div class="t " style="left:1718.00px;top:939.37px;font-size:26px;line-height:26px;color:#1b74a6;letter-spacing:-0.6px;">08.09.2021</div>
<div class="t " style="left:1563.00px;top:962.57px;font-size:4.5px;line-height:4.5px;color:#1b74a6;opacity:0.8;">Stick, Mag.</div>
<svg class="r" style="left:2010.00px;top:942.48px;" width="26" height="26" viewBox="0 0 26 26"><path d="M1.5 1.5 L24.5 24.5 M24.5 1.5 L1.5 24.5" stroke="#666" stroke-width="1.7" fill="none"/></svg>
<div class="r" style="left:44.00px;top:991.41px;width:2132.00px;height:55.93px;background:#ffffff;"></div>
<div class="r" style="left:44.00px;top:991.41px;width:67.70px;height:55.93px;background:#f0f0f0;"></div>
<div class="r" style="left:113.90px;top:991.41px;width:226.10px;height:55.93px;background:#f0f0f0;"></div>
<div class="r" style="left:342.00px;top:991.41px;width:95.60px;height:55.93px;background:#f0f0f0;"></div>
<div class="r" style="left:439.60px;top:991.41px;width:66.40px;height:55.93px;background:#f0f0f0;"></div>
<div class="r" style="left:508.00px;top:991.41px;width:156.20px;height:55.93px;background:#f0f0f0;"></div>
<div class="r" style="left:666.00px;top:991.41px;width:78.80px;height:55.93px;background:#f0f0f0;"></div>
<div class="r" style="left:746.80px;top:991.41px;width:121.70px;height:55.93px;background:#f0f0f0;"></div>
<div class="r" style="left:870.50px;top:991.41px;width:396.10px;height:55.93px;background:#f0f0f0;"></div>
<div class="r" style="left:1268.60px;top:991.41px;width:151.40px;height:55.93px;background:#f0f0f0;"></div>
<div class="r" style="left:1422.00px;top:991.41px;width:134.00px;height:55.93px;background:#f0f0f0;"></div>
<div class="r" style="left:1558.00px;top:991.41px;width:154.00px;height:55.93px;background:#f0f0f0;"></div>
<div class="r" style="left:1714.00px;top:991.41px;width:133.00px;height:55.93px;background:#f0f0f0;"></div>
<div class="r" style="left:1849.00px;top:991.41px;width:152.50px;height:55.93px;background:#f0f0f0;"></div>
<div class="r" style="left:2003.50px;top:991.41px;width:41.50px;height:55.93px;background:#f0f0f0;"></div>
<div class="r" style="left:2047.00px;top:991.41px;width:129.00px;height:55.93px;background:#f0f0f0;"></div>
<div class="r" style="left:52.70px;top:998.11px;width:50.50px;height:42.30px;background:#f7f7f7;border:1.5px solid #e6e6e6;border-radius:8px;box-sizing:border-box;"></div>
<div class="r" style="left:57.80px;top:1014.81px;width:7.00px;height:7.00px;background:#111;border-radius:50%;"></div>
<div class="r" style="left:74.20px;top:1014.81px;width:7.00px;height:7.00px;background:#111;border-radius:50%;"></div>
<div class="r" style="left:90.80px;top:1014.81px;width:7.00px;height:7.00px;background:#111;border-radius:50%;"></div>
<div class="t " style="left:117.90px;top:995.30px;font-size:26px;line-height:26px;color:#2b2b26;">untermStrich</div>
<div class="t " style="left:346.00px;top:995.30px;font-size:26px;line-height:26px;color:#2b2b26;">Frau</div>
<div class="t " style="left:512.00px;top:995.30px;font-size:26px;line-height:26px;color:#2b2b26;">Layser</div>
<div class="t " style="left:670.00px;top:995.30px;font-size:26px;line-height:26px;color:#2b2b26;letter-spacing:-0.4px;">8600</div>
<div class="t " style="left:750.80px;top:995.30px;font-size:26px;line-height:26px;color:#2b2b26;">Bruck an</div>
<div class="t " style="left:874.50px;top:995.30px;font-size:26px;line-height:26px;color:#2b2b26;">office@untermstrich.com</div>
<div class="t " style="left:1272.60px;top:995.30px;font-size:26px;line-height:26px;color:#2b2b26;">Deutschland</div>
<div class="t " style="left:1426.00px;top:995.30px;font-size:26px;line-height:26px;color:#2b2b26;letter-spacing:-0.6px;">29.04.2020</div>
<div class="t " style="left:1562.00px;top:995.30px;font-size:26px;line-height:26px;color:#2b2b26;">Ingeborg</div>
<div class="t " style="left:1718.00px;top:995.30px;font-size:26px;line-height:26px;color:#2b2b26;letter-spacing:-0.6px;">30.08.2021</div>
<div class="t " style="left:118.90px;top:1018.00px;font-size:4.5px;line-height:4.5px;color:#888;">Software GmbH</div>
<div class="t " style="left:751.80px;top:1018.00px;font-size:4.5px;line-height:4.5px;color:#2b2b26;opacity:0.8;">der Mur</div>
<div class="t " style="left:1563.00px;top:1018.50px;font-size:4.5px;line-height:4.5px;color:#2b2b26;opacity:0.8;">Stick, Mag.</div>
<svg class="r" style="left:2010.00px;top:998.41px;" width="26" height="26" viewBox="0 0 26 26"><path d="M1.5 1.5 L24.5 24.5 M24.5 1.5 L1.5 24.5" stroke="#666" stroke-width="1.7" fill="none"/></svg>
<div class="r" style="left:44.00px;top:1047.34px;width:2132.00px;height:55.93px;background:#fafafa;"></div>
<div class="r" style="left:44.00px;top:1047.34px;width:67.70px;height:55.93px;background:#ffffff;"></div>
<div class="r" style="left:113.90px;top:1047.34px;width:226.10px;height:55.93px;background:#ffffff;"></div>
<div class="r" style="left:342.00px;top:1047.34px;width:95.60px;height:55.93px;background:#ffffff;"></div>
<div class="r" style="left:439.60px;top:1047.34px;width:66.40px;height:55.93px;background:#ffffff;"></div>
<div class="r" style="left:508.00px;top:1047.34px;width:156.20px;height:55.93px;background:#ffffff;"></div>
<div class="r" style="left:666.00px;top:1047.34px;width:78.80px;height:55.93px;background:#ffffff;"></div>
<div class="r" style="left:746.80px;top:1047.34px;width:121.70px;height:55.93px;background:#ffffff;"></div>
<div class="r" style="left:870.50px;top:1047.34px;width:396.10px;height:55.93px;background:#ffffff;"></div>
<div class="r" style="left:1268.60px;top:1047.34px;width:151.40px;height:55.93px;background:#ffffff;"></div>
<div class="r" style="left:1422.00px;top:1047.34px;width:134.00px;height:55.93px;background:#ffffff;"></div>
<div class="r" style="left:1558.00px;top:1047.34px;width:154.00px;height:55.93px;background:#ffffff;"></div>
<div class="r" style="left:1714.00px;top:1047.34px;width:133.00px;height:55.93px;background:#ffffff;"></div>
<div class="r" style="left:1849.00px;top:1047.34px;width:152.50px;height:55.93px;background:#ffffff;"></div>
<div class="r" style="left:2003.50px;top:1047.34px;width:41.50px;height:55.93px;background:#ffffff;"></div>
<div class="r" style="left:2047.00px;top:1047.34px;width:129.00px;height:55.93px;background:#ffffff;"></div>
<div class="r" style="left:52.70px;top:1054.04px;width:50.50px;height:42.30px;background:#fff;border:1.5px solid #e6e6e6;border-radius:8px;box-sizing:border-box;"></div>
<div class="r" style="left:57.80px;top:1070.74px;width:7.00px;height:7.00px;background:#111;border-radius:50%;"></div>
<div class="r" style="left:74.20px;top:1070.74px;width:7.00px;height:7.00px;background:#111;border-radius:50%;"></div>
<div class="r" style="left:90.80px;top:1070.74px;width:7.00px;height:7.00px;background:#111;border-radius:50%;"></div>
<div class="t " style="left:512.00px;top:1051.23px;font-size:26px;line-height:26px;color:#1b74a6;">Leaming</div>
<div class="t " style="left:670.00px;top:1051.23px;font-size:26px;line-height:26px;color:#1b74a6;letter-spacing:-0.4px;">8600</div>
<div class="t " style="left:750.80px;top:1051.23px;font-size:26px;line-height:26px;color:#1b74a6;">Bruck an</div>
<div class="t " style="left:874.50px;top:1051.23px;font-size:26px;line-height:26px;color:#1b74a6;">office@untermstrich.com</div>
<div class="t " style="left:1272.60px;top:1051.23px;font-size:26px;line-height:26px;color:#1b74a6;">Deutschland</div>
<div class="t " style="left:1426.00px;top:1051.23px;font-size:26px;line-height:26px;color:#1b74a6;letter-spacing:-0.6px;">29.04.2020</div>
<div class="t " style="left:1562.00px;top:1051.23px;font-size:26px;line-height:26px;color:#1b74a6;">Ingeborg</div>
<div class="t " style="left:1718.00px;top:1051.23px;font-size:26px;line-height:26px;color:#1b74a6;letter-spacing:-0.6px;">08.09.2021</div>
<div class="t " style="left:751.80px;top:1073.93px;font-size:4.5px;line-height:4.5px;color:#1b74a6;opacity:0.8;">der Mur</div>
<div class="t " style="left:1563.00px;top:1074.43px;font-size:4.5px;line-height:4.5px;color:#1b74a6;opacity:0.8;">Stick, Mag.</div>
<svg class="r" style="left:2010.00px;top:1054.34px;" width="26" height="26" viewBox="0 0 26 26"><path d="M1.5 1.5 L24.5 24.5 M24.5 1.5 L1.5 24.5" stroke="#666" stroke-width="1.7" fill="none"/></svg>
<div class="r" style="left:44.00px;top:1103.27px;width:2132.00px;height:55.93px;background:#ffffff;"></div>
<div class="r" style="left:44.00px;top:1103.27px;width:67.70px;height:55.93px;background:#f0f0f0;"></div>
<div class="r" style="left:113.90px;top:1103.27px;width:226.10px;height:55.93px;background:#f0f0f0;"></div>
<div class="r" style="left:342.00px;top:1103.27px;width:95.60px;height:55.93px;background:#f0f0f0;"></div>
<div class="r" style="left:439.60px;top:1103.27px;width:66.40px;height:55.93px;background:#f0f0f0;"></div>
<div class="r" style="left:508.00px;top:1103.27px;width:156.20px;height:55.93px;background:#f0f0f0;"></div>
<div class="r" style="left:666.00px;top:1103.27px;width:78.80px;height:55.93px;background:#f0f0f0;"></div>
<div class="r" style="left:746.80px;top:1103.27px;width:121.70px;height:55.93px;background:#f0f0f0;"></div>
<div class="r" style="left:870.50px;top:1103.27px;width:396.10px;height:55.93px;background:#f0f0f0;"></div>
<div class="r" style="left:1268.60px;top:1103.27px;width:151.40px;height:55.93px;background:#f0f0f0;"></div>
<div class="r" style="left:1422.00px;top:1103.27px;width:134.00px;height:55.93px;background:#f0f0f0;"></div>
<div class="r" style="left:1558.00px;top:1103.27px;width:154.00px;height:55.93px;background:#f0f0f0;"></div>
<div class="r" style="left:1714.00px;top:1103.27px;width:133.00px;height:55.93px;background:#f0f0f0;"></div>
<div class="r" style="left:1849.00px;top:1103.27px;width:152.50px;height:55.93px;background:#f0f0f0;"></div>
<div class="r" style="left:2003.50px;top:1103.27px;width:41.50px;height:55.93px;background:#f0f0f0;"></div>
<div class="r" style="left:2047.00px;top:1103.27px;width:129.00px;height:55.93px;background:#f0f0f0;"></div>
<div class="r" style="left:52.70px;top:1109.97px;width:50.50px;height:42.30px;background:#f7f7f7;border:1.5px solid #e6e6e6;border-radius:8px;box-sizing:border-box;"></div>
<div class="r" style="left:57.80px;top:1126.67px;width:7.00px;height:7.00px;background:#111;border-radius:50%;"></div>
<div class="r" style="left:74.20px;top:1126.67px;width:7.00px;height:7.00px;background:#111;border-radius:50%;"></div>
<div class="r" style="left:90.80px;top:1126.67px;width:7.00px;height:7.00px;background:#111;border-radius:50%;"></div>
<div class="t " style="left:117.90px;top:1107.16px;font-size:26px;line-height:26px;color:#2b2b26;">US Planung GmbH</div>
<div class="t " style="left:670.00px;top:1107.16px;font-size:26px;line-height:26px;color:#2b2b26;letter-spacing:-0.4px;">8600</div>
<div class="t " style="left:750.80px;top:1107.16px;font-size:26px;line-height:26px;color:#2b2b26;">Bruck an</div>
<div class="t " style="left:874.50px;top:1107.16px;font-size:26px;line-height:26px;color:#2b2b26;">office@untermstrich.com</div>
<div class="t " style="left:1272.60px;top:1107.16px;font-size:26px;line-height:26px;color:#2b2b26;">Deutschland</div>
<div class="t " style="left:1426.00px;top:1107.16px;font-size:26px;line-height:26px;color:#2b2b26;letter-spacing:-0.6px;">04.11.2018</div>
<div class="t " style="left:1562.00px;top:1107.16px;font-size:26px;line-height:26px;color:#2b2b26;">Ingeborg</div>
<div class="t " style="left:1718.00px;top:1107.16px;font-size:26px;line-height:26px;color:#2b2b26;letter-spacing:-0.6px;">28.01.2021</div>
<div class="t " style="left:751.80px;top:1129.86px;font-size:4.5px;line-height:4.5px;color:#2b2b26;opacity:0.8;">der Mur</div>
<div class="t " style="left:1563.00px;top:1130.36px;font-size:4.5px;line-height:4.5px;color:#2b2b26;opacity:0.8;">Stick, Mag.</div>
<svg class="r" style="left:2010.00px;top:1110.27px;" width="26" height="26" viewBox="0 0 26 26"><path d="M1.5 1.5 L24.5 24.5 M24.5 1.5 L1.5 24.5" stroke="#666" stroke-width="1.7" fill="none"/></svg>
<div class="r" style="left:44.00px;top:1159.20px;width:2132.00px;height:55.93px;background:#fafafa;"></div>
<div class="r" style="left:44.00px;top:1159.20px;width:67.70px;height:55.93px;background:#ffffff;"></div>
<div class="r" style="left:113.90px;top:1159.20px;width:226.10px;height:55.93px;background:#ffffff;"></div>
<div class="r" style="left:342.00px;top:1159.20px;width:95.60px;height:55.93px;background:#ffffff;"></div>
<div class="r" style="left:439.60px;top:1159.20px;width:66.40px;height:55.93px;background:#ffffff;"></div>
<div class="r" style="left:508.00px;top:1159.20px;width:156.20px;height:55.93px;background:#ffffff;"></div>
<div class="r" style="left:666.00px;top:1159.20px;width:78.80px;height:55.93px;background:#ffffff;"></div>
<div class="r" style="left:746.80px;top:1159.20px;width:121.70px;height:55.93px;background:#ffffff;"></div>
<div class="r" style="left:870.50px;top:1159.20px;width:396.10px;height:55.93px;background:#ffffff;"></div>
<div class="r" style="left:1268.60px;top:1159.20px;width:151.40px;height:55.93px;background:#ffffff;"></div>
<div class="r" style="left:1422.00px;top:1159.20px;width:134.00px;height:55.93px;background:#ffffff;"></div>
<div class="r" style="left:1558.00px;top:1159.20px;width:154.00px;height:55.93px;background:#ffffff;"></div>
<div class="r" style="left:1714.00px;top:1159.20px;width:133.00px;height:55.93px;background:#ffffff;"></div>
<div class="r" style="left:1849.00px;top:1159.20px;width:152.50px;height:55.93px;background:#ffffff;"></div>
<div class="r" style="left:2003.50px;top:1159.20px;width:41.50px;height:55.93px;background:#ffffff;"></div>
<div class="r" style="left:2047.00px;top:1159.20px;width:129.00px;height:55.93px;background:#ffffff;"></div>
<div class="r" style="left:52.70px;top:1165.90px;width:50.50px;height:42.30px;background:#fff;border:1.5px solid #e6e6e6;border-radius:8px;box-sizing:border-box;"></div>
<div class="r" style="left:57.80px;top:1182.60px;width:7.00px;height:7.00px;background:#111;border-radius:50%;"></div>
<div class="r" style="left:74.20px;top:1182.60px;width:7.00px;height:7.00px;background:#111;border-radius:50%;"></div>
<div class="r" style="left:90.80px;top:1182.60px;width:7.00px;height:7.00px;background:#111;border-radius:50%;"></div>
<div class="t " style="left:117.90px;top:1163.09px;font-size:26px;line-height:26px;color:#2b2b26;">untermStrich</div>
<div class="t " style="left:346.00px;top:1163.09px;font-size:26px;line-height:26px;color:#2b2b26;">Herr</div>
<div class="t " style="left:443.60px;top:1163.09px;font-size:26px;line-height:26px;color:#2b2b26;">Ing.</div>
<div class="t " style="left:512.00px;top:1163.09px;font-size:26px;line-height:26px;color:#2b2b26;">Mustermann</div>
<div class="t " style="left:670.00px;top:1163.09px;font-size:26px;line-height:26px;color:#2b2b26;letter-spacing:-0.4px;">9049</div>
<div class="t " style="left:750.80px;top:1163.09px;font-size:26px;line-height:26px;color:#2b2b26;">Graz</div>
<div class="t " style="left:874.50px;top:1163.09px;font-size:26px;line-height:26px;color:#2b2b26;">office@mallxner.net</div>
<div class="t " style="left:1272.60px;top:1163.09px;font-size:26px;line-height:26px;color:#2b2b26;">Österreich</div>
<div class="t " style="left:1426.00px;top:1163.09px;font-size:26px;line-height:26px;color:#2b2b26;letter-spacing:-0.6px;">27.01.2021</div>
<div class="t " style="left:1562.00px;top:1163.09px;font-size:26px;line-height:26px;color:#2b2b26;">Ingeborg</div>
<div class="t " style="left:1718.00px;top:1163.09px;font-size:26px;line-height:26px;color:#2b2b26;letter-spacing:-0.6px;">08.09.2021</div>
<div class="t " style="left:118.90px;top:1185.79px;font-size:4.5px;line-height:4.5px;color:#888;">Software GmbH</div>
<div class="t " style="left:1563.00px;top:1186.29px;font-size:4.5px;line-height:4.5px;color:#2b2b26;opacity:0.8;">Stick, Mag.</div>
<svg class="r" style="left:2010.00px;top:1166.20px;" width="26" height="26" viewBox="0 0 26 26"><path d="M1.5 1.5 L24.5 24.5 M24.5 1.5 L1.5 24.5" stroke="#666" stroke-width="1.7" fill="none"/></svg>
<div class="r" style="left:44.00px;top:1215.13px;width:2132.00px;height:55.93px;background:#ffffff;"></div>
<div class="r" style="left:44.00px;top:1215.13px;width:67.70px;height:55.93px;background:#f0f0f0;"></div>
<div class="r" style="left:113.90px;top:1215.13px;width:226.10px;height:55.93px;background:#f0f0f0;"></div>
<div class="r" style="left:342.00px;top:1215.13px;width:95.60px;height:55.93px;background:#f0f0f0;"></div>
<div class="r" style="left:439.60px;top:1215.13px;width:66.40px;height:55.93px;background:#f0f0f0;"></div>
<div class="r" style="left:508.00px;top:1215.13px;width:156.20px;height:55.93px;background:#f0f0f0;"></div>
<div class="r" style="left:666.00px;top:1215.13px;width:78.80px;height:55.93px;background:#f0f0f0;"></div>
<div class="r" style="left:746.80px;top:1215.13px;width:121.70px;height:55.93px;background:#f0f0f0;"></div>
<div class="r" style="left:870.50px;top:1215.13px;width:396.10px;height:55.93px;background:#f0f0f0;"></div>
<div class="r" style="left:1268.60px;top:1215.13px;width:151.40px;height:55.93px;background:#f0f0f0;"></div>
<div class="r" style="left:1422.00px;top:1215.13px;width:134.00px;height:55.93px;background:#f0f0f0;"></div>
<div class="r" style="left:1558.00px;top:1215.13px;width:154.00px;height:55.93px;background:#f0f0f0;"></div>
<div class="r" style="left:1714.00px;top:1215.13px;width:133.00px;height:55.93px;background:#f0f0f0;"></div>
<div class="r" style="left:1849.00px;top:1215.13px;width:152.50px;height:55.93px;background:#f0f0f0;"></div>
<div class="r" style="left:2003.50px;top:1215.13px;width:41.50px;height:55.93px;background:#f0f0f0;"></div>
<div class="r" style="left:2047.00px;top:1215.13px;width:129.00px;height:55.93px;background:#f0f0f0;"></div>
<div class="r" style="left:52.70px;top:1221.83px;width:50.50px;height:42.30px;background:#f7f7f7;border:1.5px solid #e6e6e6;border-radius:8px;box-sizing:border-box;"></div>
<div class="r" style="left:57.80px;top:1238.53px;width:7.00px;height:7.00px;background:#111;border-radius:50%;"></div>
<div class="r" style="left:74.20px;top:1238.53px;width:7.00px;height:7.00px;background:#111;border-radius:50%;"></div>
<div class="r" style="left:90.80px;top:1238.53px;width:7.00px;height:7.00px;background:#111;border-radius:50%;"></div>
<div class="t " style="left:117.90px;top:1219.02px;font-size:26px;line-height:26px;color:#2b2b26;">Smith</div>
<div class="t " style="left:346.00px;top:1219.02px;font-size:26px;line-height:26px;color:#2b2b26;">Herr</div>
<div class="t " style="left:443.60px;top:1219.02px;font-size:26px;line-height:26px;color:#2b2b26;">Ph.D</div>
<div class="t " style="left:670.00px;top:1219.02px;font-size:26px;line-height:26px;color:#2b2b26;letter-spacing:-0.4px;">8700</div>
<div class="t " style="left:750.80px;top:1219.02px;font-size:26px;line-height:26px;color:#2b2b26;">Leoben</div>
<div class="t " style="left:874.50px;top:1219.02px;font-size:26px;line-height:26px;color:#2b2b26;">office@g-l.enineering</div>
<div class="t " style="left:1272.60px;top:1219.02px;font-size:26px;line-height:26px;color:#2b2b26;">Österreich</div>
<div class="t " style="left:1426.00px;top:1219.02px;font-size:26px;line-height:26px;color:#2b2b26;letter-spacing:-0.6px;">02.11.2022</div>
<div class="t " style="left:1562.00px;top:1219.02px;font-size:26px;line-height:26px;color:#2b2b26;">Andreas</div>
<div class="t " style="left:1718.00px;top:1219.02px;font-size:26px;line-height:26px;color:#2b2b26;letter-spacing:-0.6px;">08.06.2022</div>
<div class="t " style="left:1563.00px;top:1242.22px;font-size:4.5px;line-height:4.5px;color:#2b2b26;opacity:0.8;">Stick, Mag.</div>
<svg class="r" style="left:2010.00px;top:1222.13px;" width="26" height="26" viewBox="0 0 26 26"><path d="M1.5 1.5 L24.5 24.5 M24.5 1.5 L1.5 24.5" stroke="#666" stroke-width="1.7" fill="none"/></svg>
<div class="r" style="left:44.00px;top:1271.06px;width:2132.00px;height:55.93px;background:#fafafa;"></div>
<div class="r" style="left:44.00px;top:1271.06px;width:67.70px;height:55.93px;background:#ffffff;"></div>
<div class="r" style="left:113.90px;top:1271.06px;width:226.10px;height:55.93px;background:#ffffff;"></div>
<div class="r" style="left:342.00px;top:1271.06px;width:95.60px;height:55.93px;background:#ffffff;"></div>
<div class="r" style="left:439.60px;top:1271.06px;width:66.40px;height:55.93px;background:#ffffff;"></div>
<div class="r" style="left:508.00px;top:1271.06px;width:156.20px;height:55.93px;background:#ffffff;"></div>
<div class="r" style="left:666.00px;top:1271.06px;width:78.80px;height:55.93px;background:#ffffff;"></div>
<div class="r" style="left:746.80px;top:1271.06px;width:121.70px;height:55.93px;background:#ffffff;"></div>
<div class="r" style="left:870.50px;top:1271.06px;width:396.10px;height:55.93px;background:#ffffff;"></div>
<div class="r" style="left:1268.60px;top:1271.06px;width:151.40px;height:55.93px;background:#ffffff;"></div>
<div class="r" style="left:1422.00px;top:1271.06px;width:134.00px;height:55.93px;background:#ffffff;"></div>
<div class="r" style="left:1558.00px;top:1271.06px;width:154.00px;height:55.93px;background:#ffffff;"></div>
<div class="r" style="left:1714.00px;top:1271.06px;width:133.00px;height:55.93px;background:#ffffff;"></div>
<div class="r" style="left:1849.00px;top:1271.06px;width:152.50px;height:55.93px;background:#ffffff;"></div>
<div class="r" style="left:2003.50px;top:1271.06px;width:41.50px;height:55.93px;background:#ffffff;"></div>
<div class="r" style="left:2047.00px;top:1271.06px;width:129.00px;height:55.93px;background:#ffffff;"></div>
<div class="r" style="left:52.70px;top:1277.76px;width:50.50px;height:42.30px;background:#fff;border:1.5px solid #e6e6e6;border-radius:8px;box-sizing:border-box;"></div>
<div class="r" style="left:57.80px;top:1294.46px;width:7.00px;height:7.00px;background:#111;border-radius:50%;"></div>
<div class="r" style="left:74.20px;top:1294.46px;width:7.00px;height:7.00px;background:#111;border-radius:50%;"></div>
<div class="r" style="left:90.80px;top:1294.46px;width:7.00px;height:7.00px;background:#111;border-radius:50%;"></div>
<div class="t " style="left:117.90px;top:1274.95px;font-size:26px;line-height:26px;color:#2b2b26;">untermStrich</div>
<div class="t " style="left:346.00px;top:1274.95px;font-size:26px;line-height:26px;color:#2b2b26;">Frau</div>
<div class="t " style="left:512.00px;top:1274.95px;font-size:26px;line-height:26px;color:#2b2b26;">Mustermann</div>
<div class="t " style="left:670.00px;top:1274.95px;font-size:26px;line-height:26px;color:#2b2b26;letter-spacing:-0.4px;">9049</div>
<div class="t " style="left:750.80px;top:1274.95px;font-size:26px;line-height:26px;color:#2b2b26;">Graz</div>
<div class="t " style="left:874.50px;top:1274.95px;font-size:26px;line-height:26px;color:#2b2b26;">martina.m@netwet.com</div>
<div class="t " style="left:1272.60px;top:1274.95px;font-size:26px;line-height:26px;color:#2b2b26;">Österreich</div>
<div class="t " style="left:1426.00px;top:1274.95px;font-size:26px;line-height:26px;color:#2b2b26;letter-spacing:-0.6px;">27.01.2021</div>
<div class="t " style="left:1562.00px;top:1274.95px;font-size:26px;line-height:26px;color:#2b2b26;">Ingeborg</div>
<div class="t " style="left:1718.00px;top:1274.95px;font-size:26px;line-height:26px;color:#2b2b26;letter-spacing:-0.6px;">30.08.2021</div>
<div class="t " style="left:118.90px;top:1297.65px;font-size:4.5px;line-height:4.5px;color:#888;">Software GmbH</div>
<div class="t " style="left:1563.00px;top:1298.15px;font-size:4.5px;line-height:4.5px;color:#2b2b26;opacity:0.8;">Stick, Mag.</div>
<svg class="r" style="left:2010.00px;top:1278.06px;" width="26" height="26" viewBox="0 0 26 26"><path d="M1.5 1.5 L24.5 24.5 M24.5 1.5 L1.5 24.5" stroke="#666" stroke-width="1.7" fill="none"/></svg>
<div class="r" style="left:44.00px;top:1326.99px;width:2132.00px;height:55.93px;background:#ffffff;"></div>
<div class="r" style="left:44.00px;top:1326.99px;width:67.70px;height:55.93px;background:#f0f0f0;"></div>
<div class="r" style="left:113.90px;top:1326.99px;width:226.10px;height:55.93px;background:#f0f0f0;"></div>
<div class="r" style="left:342.00px;top:1326.99px;width:95.60px;height:55.93px;background:#f0f0f0;"></div>
<div class="r" style="left:439.60px;top:1326.99px;width:66.40px;height:55.93px;background:#f0f0f0;"></div>
<div class="r" style="left:508.00px;top:1326.99px;width:156.20px;height:55.93px;background:#f0f0f0;"></div>
<div class="r" style="left:666.00px;top:1326.99px;width:78.80px;height:55.93px;background:#f0f0f0;"></div>
<div class="r" style="left:746.80px;top:1326.99px;width:121.70px;height:55.93px;background:#f0f0f0;"></div>
<div class="r" style="left:870.50px;top:1326.99px;width:396.10px;height:55.93px;background:#f0f0f0;"></div>
<div class="r" style="left:1268.60px;top:1326.99px;width:151.40px;height:55.93px;background:#f0f0f0;"></div>
<div class="r" style="left:1422.00px;top:1326.99px;width:134.00px;height:55.93px;background:#f0f0f0;"></div>
<div class="r" style="left:1558.00px;top:1326.99px;width:154.00px;height:55.93px;background:#f0f0f0;"></div>
<div class="r" style="left:1714.00px;top:1326.99px;width:133.00px;height:55.93px;background:#f0f0f0;"></div>
<div class="r" style="left:1849.00px;top:1326.99px;width:152.50px;height:55.93px;background:#f0f0f0;"></div>
<div class="r" style="left:2003.50px;top:1326.99px;width:41.50px;height:55.93px;background:#f0f0f0;"></div>
<div class="r" style="left:2047.00px;top:1326.99px;width:129.00px;height:55.93px;background:#f0f0f0;"></div>
<div class="r" style="left:52.70px;top:1333.69px;width:50.50px;height:42.30px;background:#f7f7f7;border:1.5px solid #e6e6e6;border-radius:8px;box-sizing:border-box;"></div>
<div class="r" style="left:57.80px;top:1350.39px;width:7.00px;height:7.00px;background:#111;border-radius:50%;"></div>
<div class="r" style="left:74.20px;top:1350.39px;width:7.00px;height:7.00px;background:#111;border-radius:50%;"></div>
<div class="r" style="left:90.80px;top:1350.39px;width:7.00px;height:7.00px;background:#111;border-radius:50%;"></div>
<div class="t " style="left:117.90px;top:1330.88px;font-size:26px;line-height:26px;color:#2b2b26;">Kathleen Reich</div>
<div class="t " style="left:670.00px;top:1330.88px;font-size:26px;line-height:26px;color:#2b2b26;letter-spacing:-0.4px;">10117</div>
<div class="t " style="left:750.80px;top:1330.88px;font-size:26px;line-height:26px;color:#2b2b26;">Berlin</div>
<div class="t " style="left:874.50px;top:1330.88px;font-size:26px;line-height:26px;color:#2b2b26;">kathleen.reich@untermstrich.com</div>
<div class="t " style="left:1272.60px;top:1330.88px;font-size:26px;line-height:26px;color:#2b2b26;">Deutschland</div>
<div class="t " style="left:1426.00px;top:1330.88px;font-size:26px;line-height:26px;color:#2b2b26;letter-spacing:-0.6px;">17.03.2020</div>
<div class="t " style="left:1562.00px;top:1330.88px;font-size:26px;line-height:26px;color:#2b2b26;">Ingeborg</div>
<div class="t " style="left:1718.00px;top:1330.88px;font-size:26px;line-height:26px;color:#2b2b26;letter-spacing:-0.6px;">06.05.2019</div>
<div class="t " style="left:1563.00px;top:1354.08px;font-size:4.5px;line-height:4.5px;color:#2b2b26;opacity:0.8;">Stick, Mag.</div>
<svg class="r" style="left:2010.00px;top:1333.99px;" width="26" height="26" viewBox="0 0 26 26"><path d="M1.5 1.5 L24.5 24.5 M24.5 1.5 L1.5 24.5" stroke="#666" stroke-width="1.7" fill="none"/></svg>
<div class="r" style="left:44.00px;top:1382.92px;width:2132.00px;height:55.93px;background:#fafafa;"></div>
<div class="r" style="left:44.00px;top:1382.92px;width:67.70px;height:55.93px;background:#ffffff;"></div>
<div class="r" style="left:113.90px;top:1382.92px;width:226.10px;height:55.93px;background:#ffffff;"></div>
<div class="r" style="left:342.00px;top:1382.92px;width:95.60px;height:55.93px;background:#ffffff;"></div>
<div class="r" style="left:439.60px;top:1382.92px;width:66.40px;height:55.93px;background:#ffffff;"></div>
<div class="r" style="left:508.00px;top:1382.92px;width:156.20px;height:55.93px;background:#ffffff;"></div>
<div class="r" style="left:666.00px;top:1382.92px;width:78.80px;height:55.93px;background:#ffffff;"></div>
<div class="r" style="left:746.80px;top:1382.92px;width:121.70px;height:55.93px;background:#ffffff;"></div>
<div class="r" style="left:870.50px;top:1382.92px;width:396.10px;height:55.93px;background:#ffffff;"></div>
<div class="r" style="left:1268.60px;top:1382.92px;width:151.40px;height:55.93px;background:#ffffff;"></div>
<div class="r" style="left:1422.00px;top:1382.92px;width:134.00px;height:55.93px;background:#ffffff;"></div>
<div class="r" style="left:1558.00px;top:1382.92px;width:154.00px;height:55.93px;background:#ffffff;"></div>
<div class="r" style="left:1714.00px;top:1382.92px;width:133.00px;height:55.93px;background:#ffffff;"></div>
<div class="r" style="left:1849.00px;top:1382.92px;width:152.50px;height:55.93px;background:#ffffff;"></div>
<div class="r" style="left:2003.50px;top:1382.92px;width:41.50px;height:55.93px;background:#ffffff;"></div>
<div class="r" style="left:2047.00px;top:1382.92px;width:129.00px;height:55.93px;background:#ffffff;"></div>
<div class="r" style="left:52.70px;top:1389.62px;width:50.50px;height:42.30px;background:#fff;border:1.5px solid #e6e6e6;border-radius:8px;box-sizing:border-box;"></div>
<div class="r" style="left:57.80px;top:1406.32px;width:7.00px;height:7.00px;background:#111;border-radius:50%;"></div>
<div class="r" style="left:74.20px;top:1406.32px;width:7.00px;height:7.00px;background:#111;border-radius:50%;"></div>
<div class="r" style="left:90.80px;top:1406.32px;width:7.00px;height:7.00px;background:#111;border-radius:50%;"></div>
<div class="t " style="left:117.90px;top:1386.81px;font-size:26px;line-height:26px;color:#2b2b26;">Karin Smith</div>
<div class="t " style="left:670.00px;top:1386.81px;font-size:26px;line-height:26px;color:#2b2b26;letter-spacing:-0.4px;">10117</div>
<div class="t " style="left:750.80px;top:1386.81px;font-size:26px;line-height:26px;color:#2b2b26;">Berlin</div>
<div class="t " style="left:874.50px;top:1386.81px;font-size:26px;line-height:26px;color:#2b2b26;">k.smith@untermstrich.com</div>
<div class="t " style="left:1272.60px;top:1386.81px;font-size:26px;line-height:26px;color:#2b2b26;">Deutschland</div>
<div class="t " style="left:1426.00px;top:1386.81px;font-size:26px;line-height:26px;color:#2b2b26;letter-spacing:-0.6px;">17.03.2020</div>
<div class="t " style="left:1562.00px;top:1386.81px;font-size:26px;line-height:26px;color:#2b2b26;">Ingeborg</div>
<div class="t " style="left:1718.00px;top:1386.81px;font-size:26px;line-height:26px;color:#2b2b26;letter-spacing:-0.6px;">17.03.2020</div>
<div class="t " style="left:1563.00px;top:1410.01px;font-size:4.5px;line-height:4.5px;color:#2b2b26;opacity:0.8;">Stick, Mag.</div>
<svg class="r" style="left:2010.00px;top:1389.92px;" width="26" height="26" viewBox="0 0 26 26"><path d="M1.5 1.5 L24.5 24.5 M24.5 1.5 L1.5 24.5" stroke="#666" stroke-width="1.7" fill="none"/></svg>
<div class="r" style="left:44.00px;top:1438.85px;width:2132.00px;height:55.93px;background:#ffffff;"></div>
<div class="r" style="left:44.00px;top:1438.85px;width:67.70px;height:55.93px;background:#f0f0f0;"></div>
<div class="r" style="left:113.90px;top:1438.85px;width:226.10px;height:55.93px;background:#f0f0f0;"></div>
<div class="r" style="left:342.00px;top:1438.85px;width:95.60px;height:55.93px;background:#f0f0f0;"></div>
<div class="r" style="left:439.60px;top:1438.85px;width:66.40px;height:55.93px;background:#f0f0f0;"></div>
<div class="r" style="left:508.00px;top:1438.85px;width:156.20px;height:55.93px;background:#f0f0f0;"></div>
<div class="r" style="left:666.00px;top:1438.85px;width:78.80px;height:55.93px;background:#f0f0f0;"></div>
<div class="r" style="left:746.80px;top:1438.85px;width:121.70px;height:55.93px;background:#f0f0f0;"></div>
<div class="r" style="left:870.50px;top:1438.85px;width:396.10px;height:55.93px;background:#f0f0f0;"></div>
<div class="r" style="left:1268.60px;top:1438.85px;width:151.40px;height:55.93px;background:#f0f0f0;"></div>
<div class="r" style="left:1422.00px;top:1438.85px;width:134.00px;height:55.93px;background:#f0f0f0;"></div>
<div class="r" style="left:1558.00px;top:1438.85px;width:154.00px;height:55.93px;background:#f0f0f0;"></div>
<div class="r" style="left:1714.00px;top:1438.85px;width:133.00px;height:55.93px;background:#f0f0f0;"></div>
<div class="r" style="left:1849.00px;top:1438.85px;width:152.50px;height:55.93px;background:#f0f0f0;"></div>
<div class="r" style="left:2003.50px;top:1438.85px;width:41.50px;height:55.93px;background:#f0f0f0;"></div>
<div class="r" style="left:2047.00px;top:1438.85px;width:129.00px;height:55.93px;background:#f0f0f0;"></div>
<div class="r" style="left:52.70px;top:1445.55px;width:50.50px;height:42.30px;background:#f7f7f7;border:1.5px solid #e6e6e6;border-radius:8px;box-sizing:border-box;"></div>
<div class="r" style="left:57.80px;top:1462.25px;width:7.00px;height:7.00px;background:#111;border-radius:50%;"></div>
<div class="r" style="left:74.20px;top:1462.25px;width:7.00px;height:7.00px;background:#111;border-radius:50%;"></div>
<div class="r" style="left:90.80px;top:1462.25px;width:7.00px;height:7.00px;background:#111;border-radius:50%;"></div>
<div class="t " style="left:117.90px;top:1442.74px;font-size:26px;line-height:26px;color:#2b2b26;">untermStrich</div>
<div class="t " style="left:346.00px;top:1442.74px;font-size:26px;line-height:26px;color:#2b2b26;">Herr</div>
<div class="t " style="left:512.00px;top:1442.74px;font-size:26px;line-height:26px;color:#2b2b26;">Smith</div>
<div class="t " style="left:670.00px;top:1442.74px;font-size:26px;line-height:26px;color:#2b2b26;letter-spacing:-0.4px;">10117</div>
<div class="t " style="left:750.80px;top:1442.74px;font-size:26px;line-height:26px;color:#2b2b26;">Berlin</div>
<div class="t " style="left:874.50px;top:1442.74px;font-size:26px;line-height:26px;color:#2b2b26;">k.smith@untermstrich.com</div>
<div class="t " style="left:1272.60px;top:1442.74px;font-size:26px;line-height:26px;color:#2b2b26;">Deutschland</div>
<div class="t " style="left:1426.00px;top:1442.74px;font-size:26px;line-height:26px;color:#2b2b26;letter-spacing:-0.6px;">14.01.2021</div>
<div class="t " style="left:1562.00px;top:1442.74px;font-size:26px;line-height:26px;color:#2b2b26;">Ingeborg</div>
<div class="t " style="left:1718.00px;top:1442.74px;font-size:26px;line-height:26px;color:#2b2b26;letter-spacing:-0.6px;">30.08.2021</div>
<div class="t " style="left:118.90px;top:1465.44px;font-size:4.5px;line-height:4.5px;color:#888;">Software GmbH</div>
<div class="t " style="left:1563.00px;top:1465.94px;font-size:4.5px;line-height:4.5px;color:#2b2b26;opacity:0.8;">Stick, Mag.</div>
<svg class="r" style="left:2010.00px;top:1445.85px;" width="26" height="26" viewBox="0 0 26 26"><path d="M1.5 1.5 L24.5 24.5 M24.5 1.5 L1.5 24.5" stroke="#666" stroke-width="1.7" fill="none"/></svg>
</div>
<div class="r" style="left:2265.00px;top:44.40px;width:36.00px;height:35.60px;background:#a4e5f7;border-radius:6px;"></div>
<svg class="r" style="left:2265.00px;top:44.40px;" width="36" height="36" viewBox="0 0 36 36"><path d="M4 4 L9.5 25 L14 19.5 L27.5 32 L31 28.5 L18 15.5 L23.5 11.5 Z" fill="none" stroke="#3d4a4f" stroke-width="1.7" stroke-linejoin="round"/></svg>
<div class="r" style="left:2311.00px;top:44.40px;width:36.00px;height:35.60px;background:#f59a9a;border-radius:6px;"></div>
<div class="r" style="left:2316.50px;top:60.00px;width:24.80px;height:4.00px;background:#b56f6f;border-radius:2px;"></div>
<div class="r" style="left:2367.30px;top:42.00px;width:339.30px;height:42.50px;background:#efefef;border-radius:8px;"></div>
<svg class="r" style="left:2375.00px;top:46.00px;" width="24" height="32" viewBox="0 0 24 32"><line x1="12" y1="2" x2="12" y2="28" stroke="#b0b0b0" stroke-width="3"/><path d="M3.5 20 L12 29 L20.5 20" fill="none" stroke="#707070" stroke-width="2.4"/></svg>
<div class="t " style="left:2471.00px;top:52.46px;font-size:24.5px;line-height:24.5px;color:#2b2b26;font-weight:bold;">Funktionen</div>
<div class="r" style="left:2264.80px;top:108.40px;width:581.70px;height:981.60px;border-left:1.6px solid #e2e2e2;border-right:1.6px solid #e2e2e2;box-sizing:border-box;"></div>
<div class="r" style="left:2265.50px;top:1089.00px;width:580.50px;height:2.00px;background:#e8e8e8;"></div>
<div class="r" style="left:2265.50px;top:107.40px;width:580.50px;height:2.00px;background:#e4e4e4;"></div>
<div class="r" style="left:2265.50px;top:148.80px;width:580.50px;height:2.00px;background:#e4e4e4;"></div>
<div class="r" style="left:2265.50px;top:189.80px;width:580.50px;height:2.00px;background:#e4e4e4;"></div>
<div class="r" style="left:2265.50px;top:231.20px;width:580.50px;height:2.00px;background:#e4e4e4;"></div>
<div class="r" style="left:2265.50px;top:271.90px;width:580.50px;height:2.00px;background:#e4e4e4;"></div>
<div class="r" style="left:2265.50px;top:312.80px;width:580.50px;height:2.00px;background:#e4e4e4;"></div>
<div class="r" style="left:2265.50px;top:353.90px;width:580.50px;height:2.00px;background:#e4e4e4;"></div>
<div class="r" style="left:2265.50px;top:398.20px;width:580.50px;height:2.00px;background:#e4e4e4;"></div>
<div class="r" style="left:2265.50px;top:438.60px;width:580.50px;height:2.00px;background:#e4e4e4;"></div>
<div class="r" style="left:2265.50px;top:521.00px;width:580.50px;height:2.00px;background:#e4e4e4;"></div>
<div class="r" style="left:2265.50px;top:596.80px;width:580.50px;height:2.00px;background:#e4e4e4;"></div>
<div class="r" style="left:2265.50px;top:641.30px;width:580.50px;height:2.00px;background:#e4e4e4;"></div>
<div class="r" style="left:2265.50px;top:684.50px;width:580.50px;height:2.00px;background:#e4e4e4;"></div>
<div class="r" style="left:2265.50px;top:725.60px;width:580.50px;height:2.00px;background:#e4e4e4;"></div>
<div class="r" style="left:2265.50px;top:767.00px;width:580.50px;height:2.00px;background:#e4e4e4;"></div>
<div class="r" style="left:2265.50px;top:807.70px;width:580.50px;height:2.00px;background:#e4e4e4;"></div>
<div class="r" style="left:2265.50px;top:851.50px;width:580.50px;height:2.00px;background:#e4e4e4;"></div>
<div class="r" style="left:2265.50px;top:892.90px;width:580.50px;height:2.00px;background:#e4e4e4;"></div>
<div class="r" style="left:2265.50px;top:934.00px;width:580.50px;height:2.00px;background:#e4e4e4;"></div>
<div class="r" style="left:2265.50px;top:974.70px;width:580.50px;height:2.00px;background:#e4e4e4;"></div>
<div class="r" style="left:2265.50px;top:1015.80px;width:580.50px;height:2.00px;background:#e4e4e4;"></div>
<div class="r" style="left:2265.50px;top:1056.60px;width:580.50px;height:2.00px;background:#e4e4e4;"></div>
<div class="t " style="left:2271.40px;top:117.38px;font-size:25.3px;line-height:25.3px;color:#2b2b26;">Firma / Name</div>
<div class="t " style="left:2534.30px;top:117.38px;font-size:25.3px;line-height:25.3px;color:#2b2b26;">2-TS Architekten GmbH</div>
<div class="t " style="left:2271.40px;top:158.38px;font-size:25.3px;line-height:25.3px;color:#2b2b26;">Anrede</div>
<div class="t " style="left:2534.30px;top:158.38px;font-size:25.3px;line-height:25.3px;color:#2b2b26;">Herr</div>
<div class="t " style="left:2271.40px;top:199.38px;font-size:25.3px;line-height:25.3px;color:#2b2b26;">Vorname</div>
<div class="t " style="left:2534.30px;top:199.38px;font-size:25.3px;line-height:25.3px;color:#2b2b26;">Christian</div>
<div class="t " style="left:2271.40px;top:240.38px;font-size:25.3px;line-height:25.3px;color:#2b2b26;">Ansprechpartner</div>
<div class="t " style="left:2534.30px;top:240.38px;font-size:25.3px;line-height:25.3px;color:#2b2b26;">Mustermann</div>
<div class="t " style="left:2271.40px;top:281.38px;font-size:25.3px;line-height:25.3px;color:#2b2b26;">Master Titel</div>
<div class="t " style="left:2534.30px;top:281.38px;font-size:25.3px;line-height:25.3px;color:#2b2b26;">MSc</div>
<div class="t " style="left:2271.40px;top:322.38px;font-size:25.3px;line-height:25.3px;color:#2b2b26;">Straße</div>
<div class="t " style="left:2534.30px;top:322.38px;font-size:25.3px;line-height:25.3px;color:#2b2b26;">Mustereuther Straße 24 A</div>
<div class="t " style="left:2271.40px;top:364.08px;font-size:25.3px;line-height:25.3px;color:#2b2b26;">Plz / Ort</div>
<div class="t " style="left:2534.30px;top:364.08px;font-size:25.3px;line-height:25.3px;color:#2b2b26;">90419 Nürnberg</div>
<div class="t " style="left:2271.40px;top:407.78px;font-size:25.3px;line-height:25.3px;color:#2b2b26;">Land</div>
<div class="t " style="left:2534.30px;top:407.78px;font-size:25.3px;line-height:25.3px;color:#2b2b26;">Deutschland</div>
<div class="t " style="left:2271.40px;top:469.28px;font-size:25.3px;line-height:25.3px;color:#2b2b26;">E-Mail</div>
<div class="t " style="left:2271.40px;top:694.08px;font-size:25.3px;line-height:25.3px;color:#2b2b26;">Kategorie</div>
<div class="t " style="left:2271.40px;top:735.28px;font-size:25.3px;line-height:25.3px;color:#2b2b26;">Erstellt von</div>
<div class="t " style="left:2534.30px;top:735.28px;font-size:25.3px;line-height:25.3px;color:#2b2b26;">Ingeborg Stick, Mag.</div>
<div class="t " style="left:2271.40px;top:776.08px;font-size:25.3px;line-height:25.3px;color:#2b2b26;">Erstellt am</div>
<div class="t " style="left:2534.30px;top:776.08px;font-size:25.3px;line-height:25.3px;color:#2b2b26;letter-spacing:-0.3px;">03.07.2019 10:59</div>
<div class="t " style="left:2271.40px;top:819.88px;font-size:25.3px;line-height:25.3px;color:#2b2b26;">Geändert von</div>
<div class="t " style="left:2271.40px;top:861.78px;font-size:25.3px;line-height:25.3px;color:#2b2b26;">Geändert am</div>
<div class="t " style="left:2534.30px;top:861.78px;font-size:25.3px;line-height:25.3px;color:#2b2b26;letter-spacing:-0.3px;">08.09.2021 16:12</div>
<div class="t " style="left:2271.40px;top:902.58px;font-size:25.3px;line-height:25.3px;color:#2b2b26;">Briefanrede</div>
<div class="t " style="left:2271.40px;top:943.08px;font-size:25.3px;line-height:25.3px;color:#2b2b26;">trt</div>
<div class="t " style="left:2271.40px;top:984.38px;font-size:25.3px;line-height:25.3px;color:#2b2b26;">anredetitel</div>
<div class="t " style="left:2271.40px;top:1024.88px;font-size:25.3px;line-height:25.3px;color:#2b2b26;">Aktiv</div>
<svg class="r" style="left:2490.00px;top:362.00px;" width="26" height="32" viewBox="0 0 26 32"><line x1="3" y1="2" x2="3" y2="30" stroke="#ccc" stroke-width="2"/><path d="M3 2 L22 8 L3 14" fill="none" stroke="#ddd" stroke-width="2"/></svg>
<svg class="r" style="left:2491.00px;top:450.00px;" width="26" height="26" viewBox="0 0 26 26"><circle cx="12.8" cy="12.2" r="3.9" fill="none" stroke="#3a3a3a" stroke-width="3"/><path d="M16.7 9 L16.7 13.8 C16.7 16.6 21.8 16.6 21.8 12.2 C21.8 6.5 17.8 3 12.8 3 C7.3 3 3.2 7.1 3.2 12.4 C3.2 17.9 7.4 21.8 12.8 21.8 C14.8 21.8 16.5 21.3 18 20.5" fill="none" stroke="#3a3a3a" stroke-width="3"/></svg>
<div class="t " style="left:2540.50px;top:451.58px;font-size:25.3px;line-height:25.3px;color:#2b2b26;text-decoration:underline;text-decoration-thickness:1px;text-underline-offset:2px;">office@untermstrich.com</div>
<div class="r" style="left:2536.40px;top:486.60px;width:58.80px;height:29.40px;background:#fff;border:2px solid #dedede;border-radius:6px;box-sizing:border-box;"></div>
<div class="t " style="left:2540.80px;top:493.41px;font-size:17px;line-height:17px;color:#222;">mailto:</div>
<div class="t " style="left:2271.40px;top:530.58px;font-size:25.3px;line-height:25.3px;color:#2b2b26;">Weitere E-Mail</div>
<div class="t " style="left:2271.40px;top:564.88px;font-size:25.3px;line-height:25.3px;color:#2b2b26;">Adressen</div>
<div class="t " style="left:2271.40px;top:607.78px;font-size:25.3px;line-height:25.3px;color:#2b2b26;">Verbindungen</div>
<div class="t " style="left:2271.40px;top:652.38px;font-size:25.3px;line-height:25.3px;color:#2b2b26;">Beschreibung</div>
<div class="r" style="left:2486.00px;top:543.20px;width:36.00px;height:36.00px;background:#a4e5f7;border-radius:6px;"></div>
<svg class="r" style="left:2486.00px;top:543.20px;" width="36" height="36" viewBox="0 0 36 36"><path d="M4 4 L9.5 25 L14 19.5 L27.5 32 L31 28.5 L18 15.5 L23.5 11.5 Z" fill="none" stroke="#3d4a4f" stroke-width="1.7" stroke-linejoin="round"/></svg>
<div class="r" style="left:2486.00px;top:602.70px;width:36.00px;height:36.00px;background:#a4e5f7;border-radius:6px;"></div>
<svg class="r" style="left:2486.00px;top:602.70px;" width="36" height="36" viewBox="0 0 36 36"><path d="M4 4 L9.5 25 L14 19.5 L27.5 32 L31 28.5 L18 15.5 L23.5 11.5 Z" fill="none" stroke="#3d4a4f" stroke-width="1.7" stroke-linejoin="round"/></svg>
<div class="r" style="left:2486.00px;top:647.00px;width:36.00px;height:36.00px;background:#a4e5f7;border-radius:6px;"></div>
<svg class="r" style="left:2486.00px;top:647.00px;" width="36" height="36" viewBox="0 0 36 36"><path d="M4 4 L9.5 25 L14 19.5 L27.5 32 L31 28.5 L18 15.5 L23.5 11.5 Z" fill="none" stroke="#3d4a4f" stroke-width="1.7" stroke-linejoin="round"/></svg>
<div class="r" style="left:2534.00px;top:649.00px;width:307.00px;height:1.50px;background:#ececec;"></div>
<div class="r" style="left:2534.00px;top:655.50px;width:307.00px;height:1.50px;background:#ececec;"></div>
<div class="t " style="left:2534.30px;top:694.34px;font-size:18.5px;line-height:18.5px;color:#333;">Sonstige</div>
<div class="r" style="left:2534.00px;top:719.50px;width:307.00px;height:1.50px;background:#ececec;"></div>
<svg class="r" style="left:2488.00px;top:815.00px;" width="32" height="32" viewBox="0 0 32 32"><g stroke="#999" stroke-width="2"><line x1="2" y1="3" x2="30" y2="3"/><line x1="2" y1="8" x2="30" y2="8"/><line x1="2" y1="13" x2="30" y2="13"/><line x1="12" y1="21" x2="30" y2="21"/><line x1="14" y1="26" x2="30" y2="26"/></g><path d="M9 18 L3 24 L9 30" fill="none" stroke="#999" stroke-width="2"/><line x1="3" y1="24" x2="20" y2="24" stroke="#999" stroke-width="2"/></svg>
<div class="t " style="left:2537.00px;top:819.88px;font-size:25.3px;line-height:25.3px;color:#2b2b26;">Ingeborg Stick, Mag.</div>
<svg class="r" style="left:2535.00px;top:943.00px;" width="30" height="28" viewBox="0 0 30 28"><path d="M2 2 L28 26 M28 2 L2 26" stroke="#666" stroke-width="1.8" fill="none"/></svg>
<svg class="r" style="left:2536.00px;top:1026.00px;" width="28" height="27" viewBox="0 0 28 27"><path d="M2 17 L9 25 L26 2" stroke="#888" stroke-width="2" fill="none"/></svg>
<svg class="r" style="left:2270.00px;top:1070.00px;" width="11" height="11" viewBox="0 0 11 11"><path d="M1 1 L9.5 5.5 L1 10 Z" fill="#222"/></svg>
<div class="t " style="left:2287.30px;top:1066.13px;font-size:17.8px;line-height:17.8px;color:#333;">CardDAV</div>
<div class="r" style="left:2270.00px;top:1100.00px;width:566.00px;height:42.50px;border-right:1px solid #f1f1f1;border-bottom:1px solid #f1f1f1;box-sizing:border-box;"></div>
<div class="r" style="left:2288.00px;top:1135.50px;width:3.50px;height:3.50px;background:#bbb;border-radius:50%;"></div>
<svg class="r" style="left:2790.00px;top:1438.00px;" width="60" height="60" viewBox="0 0 60 60"><g transform="translate(4.2,2.8)"><path d="M17.3 15.8 C17.5 13 20 10.3 26.9 10.3 C33 10.3 40.8 13 40.8 20.2 C40.8 24 39.4 27 35 30.5 C31.5 33 29.8 34.5 29.8 36.5 L29.3 40.3 L24 40.8 L23.5 36.5 C23.5 33 25.9 30.7 29 28 C31.5 26 32.6 23.5 32.6 20.6 C32.6 18 30.5 16.8 27 16.8 C23 16.8 21.5 17.8 20.2 19.2 Z" fill="none" stroke="#f0c53a" stroke-width="2.3" stroke-linejoin="round"/><rect x="23.6" y="45.2" width="6.6" height="7.1" fill="none" stroke="#f0c53a" stroke-width="2.3"/></g></svg>
</body></html>
